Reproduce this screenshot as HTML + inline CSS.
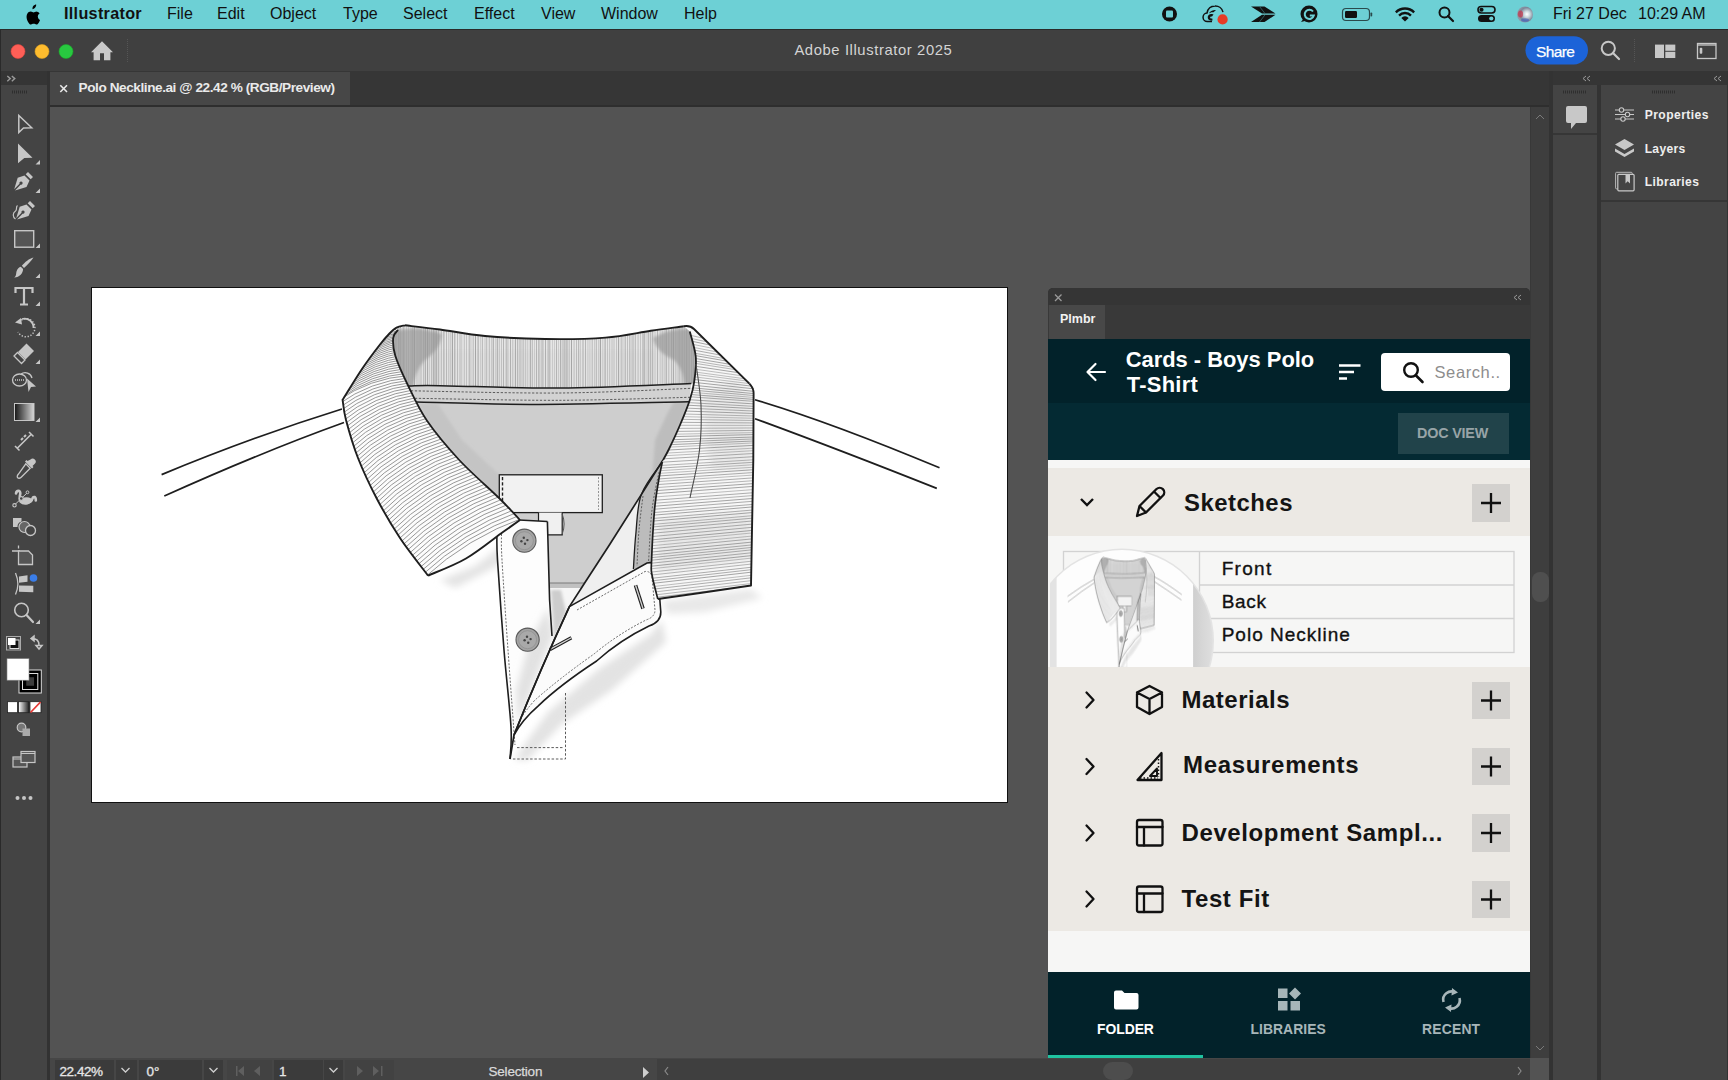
<!DOCTYPE html>
<html><head><meta charset="utf-8">
<style>
*{margin:0;padding:0;box-sizing:border-box}
html,body{width:1728px;height:1080px;overflow:hidden;background:#535353;font-family:"Liberation Sans",sans-serif}
.a{position:absolute}
svg{position:absolute;overflow:visible}
.mi{position:absolute;top:5.4px;font-size:16px;color:#111;line-height:18px;white-space:nowrap}
.t{position:absolute;white-space:nowrap;line-height:1}
</style></head><body>
<!-- MENUBAR -->
<div class="a" style="left:0;top:0;width:1728px;height:29px;background:#6dd0d5"></div>
<svg style="left:0;top:0" width="1728" height="29">
  <path d="M32.5 9.2c1-.1 2.3-.9 2.9-1.9.6-.9.9-2 .8-2.9-.9 0-2 .6-2.7 1.4-.6.7-1.1 1.9-1 2.9zM36.9 11.5c-1.4-.1-2.6.9-3.3.9-.7 0-1.7-.8-2.8-.8-1.4 0-2.8.9-3.5 2.2-1.5 2.6-.4 6.5 1.1 8.6.7 1 1.5 2.2 2.6 2.1 1-.04 1.4-.7 2.7-.7s1.6.7 2.700.7c1.1 0 1.8-1 2.500-2.100.8-1.200 1.100-2.300 1.100-2.400 0 0-2.200-.9-2.200-3.400 0-2.100 1.700-3.100 1.800-3.200-1-1.500-2.500-1.600-3-1.700z" fill="#000"/>
  <!-- stop -->
  <circle cx="1169.5" cy="14" r="7.5" fill="#111"/><rect x="1166" y="10.5" width="7" height="7" rx="1" fill="#6dd0d5"/>
  <!-- CC -->
  <path d="M1212 21.500h-4.500a4.200 4.200 0 0 1-.5-8.400c.800-4 3.800-7 8-7a8 8 0 0 1 8 6" fill="none" stroke="#111" stroke-width="1.500"/>
  <path d="M1209.500 12.500c1.500-1.800 4-2.800 6.500-2.500l-2.500 2.200c-2-.3-3.500.4-4.500 1.200z" fill="#111"/>
  <path d="M1212.500 20.500c-2.500.6-4.800-.8-4.800-3.200 0-2.300 2.100-3.800 4.300-3.300l1.500.5-1.500 2c-1-.3-1.900.2-1.900 1 0 1 1.200 1.300 2.200.9z" fill="#111"/>
  <circle cx="1222.600" cy="19.400" r="5.100" fill="#e63b25"/>
  <!-- arrows -->
  <path d="M1251 6.500h13.500l11 7h-13.500z M1251 22h13.500l11-7.200h-13.500z" fill="#111"/><path d="M1259.500 6.500l5.500 7M1259.500 22l5.500-7.200" stroke="#3a6c70" stroke-width=".8"/>
  <!-- G -->
  <circle cx="1309" cy="14" r="8.5" fill="#111"/><path d="M1301 22l3-4 1 3z" fill="#111"/>
  <path d="M1313 11.5a4.6 4.6 0 1 0 .8 4h-4" fill="none" stroke="#6dd0d5" stroke-width="2"/>
  <!-- battery -->
  <rect x="1342.5" y="8.5" width="27" height="12" rx="3.5" fill="none" stroke="#2a4a4c" stroke-width="1.2"/>
  <rect x="1345" y="11" width="12" height="7" rx="1.2" fill="#111"/><rect x="1370.5" y="12.5" width="1.7" height="4" rx=".8" fill="#2a4a4c"/>
  <!-- wifi -->
  <path d="M1395 11.5a14 14 0 0 1 20 0l-1.7 1.800a11.500 11.500 0 0 0-16.600 0z M1398.200 14.700a9.500 9.500 0 0 1 13.600 0l-1.700 1.800a7 7 0 0 0-10.200 0z M1401.300 17.900a5 5 0 0 1 7.400 0L1405 21.600z" fill="#111"/>
  <!-- search -->
  <circle cx="1444.5" cy="12.5" r="5" fill="none" stroke="#111" stroke-width="2"/><path d="M1448 16l5 5" stroke="#111" stroke-width="2.2" stroke-linecap="round"/>
  <!-- control center -->
  <rect x="1478" y="6.5" width="17" height="6.500" rx="3.250" fill="none" stroke="#111" stroke-width="1.600"/><circle cx="1481.500" cy="9.750" r="2.100" fill="#111"/>
  <rect x="1478" y="15" width="17" height="7" rx="3.5" fill="#111"/><circle cx="1491.300" cy="18.500" r="2.100" fill="#6dd0d5"/>
  <!-- siri -->
  <defs><radialGradient id="siri" cx="62%" cy="48%" r="55%"><stop offset="0" stop-color="#ffffff"/><stop offset=".35" stop-color="#c9d6dc"/><stop offset=".75" stop-color="#7d8798"/><stop offset="1" stop-color="#8c9aa8"/></radialGradient></defs>
  <circle cx="1525" cy="14.500" r="8" fill="url(#siri)"/><ellipse cx="1520.500" cy="14" rx="2.600" ry="3.500" fill="#c8344a" opacity=".7"/><ellipse cx="1525" cy="20" rx="4" ry="1.800" fill="#3a5fc0" opacity=".6"/>
</svg>
<div class="t" style="left:64px;top:5px;font-size:16.2px;color:#111;font-weight:bold;letter-spacing:.3px">Illustrator</div>
<div class="mi" style="left:167px">File</div>
<div class="mi" style="left:217px">Edit</div>
<div class="mi" style="left:270px">Object</div>
<div class="mi" style="left:343px">Type</div>
<div class="mi" style="left:403px">Select</div>
<div class="mi" style="left:474px">Effect</div>
<div class="mi" style="left:541px">View</div>
<div class="mi" style="left:601px">Window</div>
<div class="mi" style="left:684px">Help</div>
<div class="mi" style="left:1553px">Fri 27 Dec</div>
<div class="mi" style="left:1638px">10:29 AM</div>

<!-- TITLE BAR -->
<div class="a" style="left:0;top:29px;width:1728px;height:42px;background:#404040;border-top:1px solid #2a2a2a"></div>
<svg style="left:0;top:29px" width="1728" height="42">
  <circle cx="18" cy="22.5" r="7" fill="#fe5f57" stroke="#e0443e" stroke-width=".6"/>
  <circle cx="42" cy="22.5" r="7" fill="#febc2e" stroke="#dea123" stroke-width=".6"/>
  <circle cx="66" cy="22.5" r="7" fill="#28c840" stroke="#1aab29" stroke-width=".6"/>
  <path d="M102 12.3l11 11h-2.600v7.900h-6.400v-7h-4v7h-6.400v-7.900h-2.600z" fill="#c9c9c9"/>
  <line x1="127.500" y1="10" x2="127.500" y2="34" stroke="#555" stroke-dasharray="1 1"/>
  <!-- right icons -->
  <rect x="1525.500" y="7.200" width="62.500" height="28.300" rx="14.150" fill="#1c63d8"/>
  <circle cx="1608.300" cy="19.300" r="6.600" fill="none" stroke="#c7c7c7" stroke-width="2"/><path d="M1613 24l6 6" stroke="#c7c7c7" stroke-width="2.200" stroke-linecap="round"/>
  <line x1="1634.500" y1="10" x2="1634.500" y2="33" stroke="#555" stroke-dasharray="1 1"/>
  <rect x="1655" y="15.600" width="9" height="13.400" fill="#c7c7c7"/><rect x="1665.300" y="15.600" width="10" height="6.200" fill="#c7c7c7"/><rect x="1665.300" y="22.800" width="10" height="6.200" fill="#c7c7c7"/>
  <rect x="1697.500" y="14.500" width="18.500" height="15" fill="none" stroke="#c7c7c7" stroke-width="1.300"/><line x1="1697.500" y1="16" x2="1716" y2="16" stroke="#c7c7c7" stroke-width="1.300"/><rect x="1699.700" y="18.700" width="2.600" height="6" rx="1" fill="#c7c7c7"/>
</svg>
<div class="t" style="left:794.4px;top:43.4px;font-size:14.8px;color:#d4d4d4;letter-spacing:.6px">Adobe Illustrator 2025</div>
<div class="t" style="left:1536px;top:44px;font-size:15.5px;color:#fff;letter-spacing:-.6px;-webkit-text-stroke:.25px #fff">Share</div>

<!-- TAB ROW -->
<div class="a" style="left:0;top:71px;width:1553px;height:36px;background:#363636"></div>
<div class="a" style="left:50px;top:72px;width:300px;height:33px;background:#474747"></div>
<div class="a" style="left:50px;top:105px;width:1503px;height:2px;background:#2e2e2e"></div>
<svg style="left:0;top:71px" width="400" height="36">
  <path d="M60.300 14.300l6.700 6.700M67 14.300l-6.700 6.700" stroke="#e8e8e8" stroke-width="1.600"/>
</svg>
<div class="t" style="left:78.6px;top:81.1px;font-size:13.6px;color:#eaeaea;font-weight:bold;letter-spacing:-.43px">Polo Neckline.ai @ 22.42 % (RGB/Preview)</div>

<!-- LEFT TOOLBAR -->
<div class="a" style="left:0;top:71px;width:48px;height:14px;background:#353535"></div>
<div class="a" style="left:0;top:85px;width:48px;height:995px;background:#444"></div>
<div class="a" style="left:47px;top:71px;width:3px;height:1009px;background:#323232"></div>
<div class="a" style="left:0;top:29px;width:1px;height:1051px;background:#2a2a2a"></div>
<svg style="left:0;top:0" width="50" height="1080" id="tools">
  <path d="M7.300 76l3 2.600-3 2.600M11.800 76l3 2.600-3 2.600" fill="none" stroke="#9a9a9a" stroke-width="1.400"/>
  <path d="M12 92h15" stroke="#2e2e2e" stroke-width="3" stroke-dasharray="1 1"/>
  <g fill="#c6c6c6" stroke="#c6c6c6">
  <path d="M18.800 115.500v17l4.700-4.600 8.200-.2z" fill="none" stroke-width="1.500"/>
  <path d="M18 143.500l14.500 14.300-8.200.3-6.300 5.200z" stroke="none"/>
  <path d="M35.500 164.500h4.500v-4.500z M35.500 193h4.500v-4.500z M35.500 248h4.500v-4.500z M35.500 278h4.500v-4.500z M35.500 306h4.500v-4.500z M35.500 336h4.500v-4.500z M35.500 364h4.500v-4.500z M35.500 422h4.500v-4.500z M35.500 624h4.500v-4.500z" stroke="none"/>
  <!-- pen -->
  <path d="M28 172l5 5-2.300 2.300-5-5z M24.500 175.500l5 5-3 6.500-11.500 3.500 5.500-5.800a1.600 1.600 0 1 0-1-1l-5.300 5.500 3.500-11.500z" stroke="none"/>
  <!-- curvature -->
  <path d="M30 201l5 5-2.300 2.300-5-5z M26.500 204.500l5 5-3 6.500-11.500 3.500 5.500-5.800a1.600 1.600 0 1 0-1-1l-5.300 5.500 3.500-11.500z" stroke="none"/>
  <path d="M15.500 219c-3-2-3-6 0-8 2-1.500 0-4 2-5.500" fill="none" stroke-width="1.200"/>
  <!-- rect -->
  <rect x="14.700" y="230.700" width="19" height="16.500" fill="#555" stroke-width="1.400"/>
  <!-- brush -->
  <path d="M33.500 257.500c-2 3-6 7.500-9.500 10.500l-2.200-2.200c3-3.500 7.500-7.500 11.700-8.300z M20.800 266.800l2.300 2.300c0 4-3.500 8.500-9 8.400 2.500-1.200 1.800-4 2.500-6.200.8-2.500 2.400-4.300 4.200-4.500z" stroke="none"/>
  <!-- Type -->
  <path d="M15.500 293v-5h17v5M24 288v16.500M20 304.500h8" fill="none" stroke-width="2.200"/>
  <!-- rotate -->
  <path d="M19 322a9 9 0 1 1 -1 10" fill="none" stroke-width="1.500" stroke-dasharray="1.300 1.700"/>
  <path d="M22 319a9 9 0 0 1 11.500 9" fill="none" stroke-width="1.800"/>
  <path d="M15 322.500l6-4.500 1 6.500z" stroke="none"/>
  <!-- eraser -->
  <path d="M26.500 343.500l7.500 7.500-8.500 8.500-7.500-7.500z" stroke="none"/>
  <path d="M17.500 352.500l7.500 7.500-3.500 3.500-7.500-7.500z" fill="none" stroke-width="1.300"/>
  <!-- shape builder -->
  <ellipse cx="19.500" cy="380" rx="7" ry="6" fill="none" stroke-width="1.300"/>
  <path d="M21 374a7 7 0 0 1 11 4" fill="none" stroke-width="1.300"/>
  <path d="M15 380h10" stroke-width="1.300" stroke-dasharray="1 1"/>
  <path d="M27 378.500l9 8-5 .5-2.500 5z" stroke="none"/>
  <!-- gradient -->
  <defs><linearGradient id="gr" x1="0" y1="0" x2="1" y2="0"><stop offset="0" stop-color="#151515"/><stop offset="1" stop-color="#d8d8d8"/></linearGradient></defs>
  <rect x="14.500" y="403.500" width="19.500" height="17" fill="url(#gr)" stroke-width="1"/>
  <!-- width/measure -->
  <path d="M15 446l4.500 4.500M29 432l4.500 4.500M17 448.500l14.500-14.500" fill="none" stroke-width="1.600"/>
  <path d="M21 440l2-2M24 437l2-2" stroke-width="2"/>
  <!-- eyedropper -->
  <path d="M30.500 459.500a3 3 0 0 1 4.300 4.300l-2.300 2.300 1 1-1.500 1.500-7-7 1.500-1.500 1 1z" stroke="none"/>
  <path d="M25.800 463.800l4.400 4.400-9 9c-1 1-2.600 1.500-3.500.6-.9-.9-.4-2.500.6-3.500z" fill="none" stroke-width="1.300"/>
  <!-- puppet warp -->
  <g transform="translate(5 455)">
   <path d="M11 38.500C11.500 35 15.500 35 15.300 38.500C15 41.500 13.500 43.500 15.500 46.500C19 50 26 48.500 27.500 43.500C28.500 41 31 41.500 30.800 45.500" fill="none" stroke-width="2.600" stroke-linecap="round"/>
   <ellipse cx="21.500" cy="45.500" rx="6" ry="3.300" stroke="none"/>
   <path d="M9.500 50L22.500 37.500" stroke-width="1" stroke="#c6c6c6"/>
   <circle cx="22.500" cy="37.300" r="1.400" fill="#444" stroke-width="1"/>
   <circle cx="16.300" cy="43.500" r="1.900" fill="#444" stroke-width="1.100"/>
   <circle cx="9.500" cy="50.300" r="1.700" fill="#444" stroke-width="1.100"/>
  </g>
  <!-- blend/live paint -->
  <path d="M13 518h8.500v3.500a5.500 5.500 0 0 0-4 5.500h-4.500z" stroke="none"/>
  <circle cx="24.500" cy="527" r="5.500" fill="#666" stroke-width="1.200"/><circle cx="30.500" cy="530.500" r="5" fill="#444" stroke-width="1.300"/>
  <!-- artboard -->
  <path d="M12 551h8M18.500 545.500v3" fill="none" stroke-width="1.300"/>
  <path d="M18.500 551v13.500h14v-9.500l-4-4z" fill="#555" stroke-width="1.300"/>
  <!-- perspective -->
  <path d="M15.500 573c3 7 3 15 0 21.500" fill="none" stroke-width="1.300"/>
  <path d="M19 576.500l8.500-1.200v6.500l-8.500 1z M19 585.500l14.300.3v6.500l-14.300-.5z" stroke="none"/>
  <!-- zoom -->
  <circle cx="21.500" cy="610" r="6.800" fill="none" stroke-width="1.600"/><path d="M26.500 615l6.500 7" stroke-width="2.200" stroke-linecap="round"/>
  <!-- swap/default -->
  <path d="M32 638.500c4 0 7 2 7 6.500M39 649l-3-3.500h6z M31 638.500l3-2.500v5z" fill="none" stroke-width="1.500"/>
  </g>
  <circle cx="33.500" cy="578" r="3.800" fill="#3a7de8"/>
  <rect x="6.500" y="636.500" width="14" height="13.500" fill="none" stroke="#aaa" stroke-width="1"/>
  <rect x="10" y="640" width="9" height="8.500" fill="#111" stroke="#ddd" stroke-width="1"/>
  <rect x="8" y="638" width="7.500" height="7" fill="#fff"/>
  <!-- big fill/stroke -->
  <rect x="19" y="670" width="22.300" height="23" fill="#000" stroke="#ddd" stroke-width="1"/>
  <rect x="22.500" y="673.500" width="15.300" height="16" fill="none" stroke="#ddd" stroke-width="1"/>
  <rect x="25.500" y="676.500" width="9.300" height="10" fill="#3c3c3c" stroke="#000" stroke-width="1.500"/>
  <rect x="7" y="658.700" width="22" height="21.500" fill="#fff" stroke="#888" stroke-width=".6"/>
  <!-- color modes -->
  <rect x="7.500" y="701.700" width="10" height="11" fill="#fff" stroke="#222" stroke-width=".8"/>
  <defs><linearGradient id="g2" x1="0" x2="1"><stop offset="0" stop-color="#fff"/><stop offset="1" stop-color="#222"/></linearGradient></defs>
  <rect x="18.500" y="701.700" width="10.500" height="11" fill="url(#g2)" stroke="#222" stroke-width=".8"/>
  <rect x="30" y="701.700" width="11" height="11" fill="#fff" stroke="#222" stroke-width=".8"/>
  <path d="M30.500 712.500l10-10.500" stroke="#e53935" stroke-width="1.800"/>
  <!-- draw mode -->
  <circle cx="21.500" cy="727.500" r="4.300" fill="#777" stroke="#c6c6c6" stroke-width="1.200"/>
  <rect x="22.500" y="728.500" width="7.500" height="7.500" fill="#aaa"/>
  <!-- screen mode -->
  <rect x="13" y="757" width="14" height="10" fill="#555" stroke="#c6c6c6" stroke-width="1.200"/>
  <rect x="21" y="751.500" width="14" height="11" fill="#555" stroke="#c6c6c6" stroke-width="1.200"/>
  <path d="M21 753.500h14M13 759h8" stroke="#c6c6c6" stroke-width="1"/>
  <!-- dots -->
  <circle cx="17.500" cy="798" r="2" fill="#c6c6c6"/><circle cx="24" cy="798" r="2" fill="#c6c6c6"/><circle cx="30.500" cy="798" r="2" fill="#c6c6c6"/>
</svg>

<!-- CANVAS SCROLLBARS -->
<div class="a" style="left:1530px;top:107px;width:19px;height:951px;background:#3e3e3e;border-left:1px solid #383838"></div>
<div class="a" style="left:1532px;top:572px;width:17px;height:30px;background:#4f4f4f;border-radius:8px"></div>
<div class="a" style="left:1549px;top:71px;width:4px;height:1009px;background:#333"></div>
<svg style="left:1530px;top:107px" width="20" height="951">
  <path d="M6 12l4-4 4 4" fill="none" stroke="#7a7a7a" stroke-width="1"/>
  <path d="M6 939l4 4 4-4" fill="none" stroke="#7a7a7a" stroke-width="1"/>
</svg>

<!-- STATUS BAR -->
<div class="a" style="left:50px;top:1058px;width:1480px;height:22px;background:#464646"></div>
<div class="a" style="left:55px;top:1060px;width:59px;height:20px;background:#3b3b3b"></div>
<div class="a" style="left:116px;top:1060px;width:21px;height:20px;background:#3b3b3b"></div>
<div class="a" style="left:139px;top:1060px;width:63px;height:20px;background:#3b3b3b"></div>
<div class="a" style="left:204px;top:1060px;width:19px;height:20px;background:#3b3b3b"></div>
<div class="a" style="left:227px;top:1060px;width:45px;height:20px;background:#424242"></div>
<div class="a" style="left:274px;top:1060px;width:49px;height:20px;background:#3b3b3b"></div>
<div class="a" style="left:324px;top:1060px;width:19px;height:20px;background:#3b3b3b"></div>
<div class="a" style="left:345px;top:1060px;width:49px;height:20px;background:#424242"></div>
<div class="a" style="left:657px;top:1059px;width:873px;height:21px;background:#3f3f3f"></div>
<div class="a" style="left:1103px;top:1062px;width:30px;height:18px;background:#4d4d4d;border-radius:9px"></div>
<div class="t" style="left:59.5px;top:1064.5px;font-size:13.5px;color:#e6e6e6;letter-spacing:-.45px;-webkit-text-stroke:.3px #e6e6e6">22.42%</div>
<div class="t" style="left:146.5px;top:1064.5px;font-size:13.5px;color:#e6e6e6;-webkit-text-stroke:.3px #e6e6e6">0°</div>
<div class="t" style="left:279px;top:1064.5px;font-size:13.5px;color:#e6e6e6;-webkit-text-stroke:.3px #e6e6e6">1</div>
<div class="t" style="left:488.5px;top:1064.5px;font-size:13.5px;color:#dadada;letter-spacing:-.2px;-webkit-text-stroke:.25px #dadada">Selection</div>
<svg style="left:0;top:1058px" width="1550" height="22">
  <g fill="none" stroke="#cfcfcf" stroke-width="1.300">
  <path d="M121.500 10l4 4 4-4M209.500 10l4 4 4-4M329.500 10l4 4 4-4"/>
  </g>
  <g fill="#5f5f5f">
  <path d="M236 8v10h1.500v-10zM244 8v10l-6-5z M260 8v10l-6-5z M357 8v10l6-5z M373 8v10l6-5zM381 8v10h1.500v-10z"/>
  </g>
  <path d="M643 9v11l6-5.500z" fill="#cfcfcf"/>
  <path d="M668 9l-3 4 3 4" fill="none" stroke="#8a8a8a" stroke-width="1.200"/>
  <path d="M1518 9l3 4-3 4" fill="none" stroke="#8a8a8a" stroke-width="1.200"/>
</svg>

<!-- RIGHT DOCK -->
<div class="a" style="left:1553px;top:71px;width:175px;height:14px;background:#353535"></div>
<div class="a" style="left:1553px;top:85px;width:44px;height:995px;background:#444"></div>
<div class="a" style="left:1597px;top:85px;width:4px;height:995px;background:#333"></div>
<div class="a" style="left:1601px;top:85px;width:126px;height:995px;background:#444"></div>
<div class="a" style="left:1727px;top:71px;width:1px;height:1009px;background:#333"></div>
<div class="a" style="left:1553px;top:133px;width:44px;height:2px;background:#363636"></div>
<div class="a" style="left:1601px;top:200px;width:126px;height:2px;background:#363636"></div>
<svg style="left:1553px;top:71px" width="175" height="140">
  <path d="M33 5l-3 2.500 3 2.500M37 5l-3 2.500 3 2.500M164 5l-3 2.500 3 2.500M168 5l-3 2.500 3 2.500" fill="none" stroke="#9a9a9a" stroke-width="1"/>
  <path d="M10 21h24M99 21h23" stroke="#2e2e2e" stroke-width="3" stroke-dasharray="1 1"/>
  <path d="M15 35h17a2 2 0 0 1 2 2v13a2 2 0 0 1-2 2h-9l-5 6v-6h-3a2 2 0 0 1-2-2v-13a2 2 0 0 1 2-2z" fill="#c8c8c8"/>
  <g stroke="#c8c8c8" stroke-width="1.100" fill="#444">
   <path d="M62 39h19M62 43.500h19M62 48h19"/>
   <circle cx="68.500" cy="39" r="2.200"/><circle cx="74.500" cy="43.500" r="2.200"/><circle cx="70" cy="48" r="2.200"/>
  </g>
  <path d="M71.500 68l9.500 5.500-9.500 5.500-9.500-5.500z" fill="#c8c8c8"/>
  <path d="M62 77.500l9.500 5.500 9.500-5.500v3l-9.500 5.500-9.500-5.500z" fill="#c8c8c8"/>
  <rect x="62.600" y="101.300" width="16.600" height="16.600" rx="1" fill="none" stroke="#b8b8b8" stroke-width="1"/>
  <rect x="64.800" y="103.300" width="16.300" height="16.500" rx="1" fill="#444" stroke="#c8c8c8" stroke-width="1.200"/>
  <path d="M72.500 104v8.500l2.200-2.200 2.300 2.200v-8.500z" fill="#c8c8c8"/>
</svg>
<div class="t" style="left:1644.7px;top:108.7px;font-size:12.1px;color:#eeeeee;font-weight:bold;letter-spacing:.44px">Properties</div>
<div class="t" style="left:1644.7px;top:142.5px;font-size:12.1px;color:#eeeeee;font-weight:bold;letter-spacing:.3px">Layers</div>
<div class="t" style="left:1644.7px;top:175.9px;font-size:12.1px;color:#eeeeee;font-weight:bold;letter-spacing:.4px">Libraries</div>

<!-- ARTBOARD -->
<div class="a" style="left:91px;top:287px;width:917px;height:516px;background:#fff;border:1px solid #111"></div>
<svg style="left:0;top:0" width="1728" height="1080"><g id="drw"><defs><filter id="blr" x="-30%" y="-30%" width="160%" height="160%"><feGaussianBlur stdDeviation="3.5"/></filter><filter id="blr2" x="-30%" y="-30%" width="160%" height="160%"><feGaussianBlur stdDeviation="1.6"/></filter></defs>
<path d="M416.0 402.0 L417.0 402.0 L418.1 402.0 L419.2 402.1 L420.4 402.1 L421.7 402.1 L423.0 402.2 L424.3 402.2 L425.7 402.3 L427.1 402.3 L428.6 402.3 L430.2 402.4 L431.7 402.4 L433.4 402.5 L435.0 402.5 L436.7 402.6 L438.4 402.6 L440.2 402.7 L442.0 402.8 L443.9 402.8 L445.8 402.9 L447.7 402.9 L449.6 403.0 L451.6 403.0 L453.6 403.1 L455.7 403.2 L457.8 403.2 L459.9 403.3 L462.0 403.3 L464.1 403.4 L466.3 403.5 L468.5 403.5 L470.7 403.6 L473.0 403.6 L475.2 403.7 L477.5 403.7 L479.8 403.8 L482.1 403.8 L484.4 403.9 L486.8 403.9 L489.1 404.0 L491.5 404.0 L493.9 404.1 L496.3 404.1 L498.7 404.2 L501.1 404.2 L503.5 404.2 L505.9 404.3 L508.3 404.3 L510.7 404.3 L513.1 404.3 L515.5 404.4 L518.0 404.4 L520.4 404.4 L522.8 404.4 L525.2 404.4 L527.6 404.4 L530.0 404.4 L531.7 404.4 L533.5 404.4 L535.4 404.4 L537.2 404.4 L539.1 404.4 L541.0 404.4 L543.0 404.3 L545.0 404.3 L547.0 404.3 L549.1 404.3 L551.1 404.3 L553.2 404.2 L555.4 404.2 L557.5 404.2 L559.7 404.2 L561.9 404.1 L564.1 404.1 L566.4 404.1 L568.6 404.0 L570.9 404.0 L573.2 404.0 L575.5 403.9 L577.8 403.9 L580.1 403.9 L582.4 403.8 L584.8 403.8 L587.1 403.8 L589.5 403.7 L591.8 403.7 L594.2 403.6 L596.6 403.6 L598.9 403.5 L601.3 403.5 L603.7 403.5 L606.0 403.4 L608.4 403.4 L610.8 403.3 L613.1 403.3 L615.5 403.2 L617.8 403.2 L620.1 403.1 L622.4 403.1 L624.7 403.0 L627.0 403.0 L629.3 402.9 L631.6 402.9 L633.8 402.8 L636.0 402.8 L638.2 402.8 L640.4 402.7 L642.6 402.7 L644.7 402.6 L646.8 402.6 L648.9 402.5 L651.0 402.5 L653.0 402.4 L655.0 402.4 L657.0 402.4 L658.9 402.3 L660.8 402.3 L662.7 402.2 L664.5 402.2 L666.3 402.2 L668.1 402.1 L669.8 402.1 L671.5 402.0 L673.1 402.0 L674.7 402.0 L676.2 401.9 L677.7 401.9 L679.2 401.9 L680.6 401.9 L682.0 401.8 L683.3 401.8 L684.5 401.8 L685.7 401.8 L686.9 401.7 L688.0 401.7 L689.0 401.7 L689.2 401.7 L688.6 403.5 L687.9 405.4 L687.2 407.3 L686.5 409.2 L685.7 411.2 L684.9 413.2 L684.1 415.2 L683.3 417.2 L682.5 419.2 L681.6 421.1 L680.8 423.1 L680.0 425.0 L679.2 426.9 L678.3 428.9 L677.4 430.9 L676.5 432.9 L675.6 434.9 L674.7 436.9 L673.8 438.9 L672.9 440.8 L672.1 442.6 L671.2 444.4 L670.4 446.0 L669.7 447.6 L669.0 449.0 L667.6 451.7 L666.4 454.0 L665.3 456.0 L664.4 457.6 L663.6 459.0 L663.0 460.0 L641.3 494.6 L610.0 544.0 L584.0 584.0 L549.0 584.0 L547.4 521.5 L520.0 520.0 L520.0 520.0 L519.2 519.2 L518.4 518.3 L517.4 517.2 L516.3 516.1 L515.2 514.8 L513.9 513.4 L512.5 511.9 L511.1 510.4 L509.5 508.7 L507.8 506.9 L506.0 505.1 L504.1 503.1 L502.1 501.1 L500.0 499.0 L498.9 497.9 L497.7 496.8 L496.5 495.6 L495.2 494.4 L493.9 493.1 L492.5 491.8 L491.1 490.5 L489.6 489.2 L488.1 487.8 L486.6 486.4 L485.1 485.0 L483.5 483.5 L481.9 482.1 L480.3 480.6 L478.8 479.1 L477.2 477.7 L475.6 476.2 L474.0 474.7 L472.4 473.2 L470.8 471.7 L469.3 470.2 L467.7 468.7 L466.2 467.2 L464.7 465.7 L463.3 464.3 L461.9 462.8 L460.5 461.4 L459.2 460.0 L457.7 458.4 L456.3 456.9 L454.9 455.3 L453.4 453.7 L452.0 452.2 L450.6 450.6 L449.2 449.0 L447.9 447.4 L446.5 445.9 L445.2 444.3 L443.8 442.7 L442.5 441.2 L441.2 439.6 L439.9 438.0 L438.7 436.5 L437.4 434.9 L436.2 433.3 L435.0 431.8 L433.8 430.2 L432.7 428.7 L431.5 427.2 L430.4 425.6 L429.3 424.1 L428.2 422.6 L427.2 421.1 L425.9 419.2 L424.7 417.3 L423.5 415.5 L422.4 413.6 L421.3 411.7 L420.2 409.8 L419.2 408.0 L418.2 406.1 L417.2 404.3 L416.3 402.4Z" fill="#cecece"/>
<path d="M674 402 L689 402 L680 425 L669 449 L663 460 L652 480 L655 440 L668 412Z" fill="#bdbdbd" filter="url(#blr2)"/>
<path d="M418 403 L438 404 L462 440 L505 480 L500 499 L459 460 L427 421Z" fill="#c4c4c4" filter="url(#blr2)"/>
<path d="M549 583 L586 583 L583 588 L549 588Z" fill="#c0c0c0"/>
<path d="M549.5 583 H585" stroke="#7a7a7a" stroke-width="1"/>
<path d="M549 588 L583 588 L569.4 606.6 L552 636 Z" fill="#f6f6f6"/>
<path d="M551 590 L561 590 L566 612 L554 640 Z" fill="#cdcdcd" filter="url(#blr2)"/>
<path d="M405.0 325.3 L406.1 325.4 L407.5 325.6 L409.0 325.8 L410.6 326.0 L412.4 326.2 L414.4 326.4 L416.4 326.6 L418.6 326.9 L420.8 327.1 L423.1 327.4 L425.5 327.7 L427.9 328.0 L430.3 328.3 L432.8 328.6 L435.2 328.9 L437.6 329.2 L440.0 329.5 L441.8 329.8 L443.7 330.0 L445.5 330.3 L447.4 330.6 L449.2 330.9 L451.1 331.2 L453.1 331.5 L455.0 331.8 L456.9 332.2 L458.9 332.5 L460.9 332.8 L462.9 333.2 L465.0 333.5 L467.1 333.8 L469.2 334.1 L471.4 334.4 L473.5 334.7 L475.8 335.0 L478.0 335.3 L480.3 335.5 L482.6 335.8 L485.0 336.0 L486.8 336.2 L488.6 336.3 L490.4 336.5 L492.3 336.6 L494.2 336.8 L496.1 336.9 L498.0 337.0 L500.0 337.2 L502.0 337.3 L504.0 337.4 L506.0 337.5 L508.0 337.7 L510.1 337.8 L512.1 337.9 L514.2 338.0 L516.3 338.1 L518.4 338.2 L520.5 338.3 L522.5 338.4 L524.6 338.5 L526.7 338.5 L528.8 338.6 L530.9 338.7 L533.0 338.7 L535.1 338.8 L537.1 338.8 L539.2 338.9 L541.3 338.9 L543.3 339.0 L545.3 339.0 L547.3 339.0 L549.3 339.0 L551.4 339.1 L553.4 339.1 L555.5 339.1 L557.6 339.1 L559.7 339.1 L561.8 339.1 L563.8 339.1 L565.9 339.1 L568.0 339.0 L570.1 339.0 L572.2 339.0 L574.3 339.0 L576.3 338.9 L578.4 338.9 L580.5 338.8 L582.5 338.8 L584.5 338.7 L586.5 338.6 L588.5 338.6 L590.5 338.5 L592.5 338.4 L594.4 338.3 L596.3 338.2 L598.2 338.1 L600.1 338.0 L601.9 337.9 L603.7 337.7 L605.5 337.6 L607.9 337.4 L610.2 337.2 L612.5 336.9 L614.8 336.7 L617.0 336.4 L619.2 336.1 L621.4 335.8 L623.5 335.4 L625.7 335.1 L627.7 334.7 L629.8 334.4 L631.8 334.0 L633.8 333.7 L635.8 333.3 L637.7 333.0 L639.7 332.6 L641.5 332.3 L643.4 332.0 L645.3 331.7 L647.1 331.4 L648.9 331.1 L650.7 330.8 L653.2 330.4 L655.6 330.1 L658.1 329.7 L660.6 329.4 L663.0 329.1 L665.5 328.7 L667.8 328.4 L670.1 328.1 L672.3 327.8 L674.3 327.6 L676.3 327.3 L678.1 327.1 L679.8 326.8 L681.3 326.6 L682.7 326.5 L683.8 326.3 L689.8 331.5 L690.1 332.6 L690.5 334.0 L690.9 335.7 L691.4 337.5 L692.0 339.5 L692.6 341.6 L693.2 343.9 L693.8 346.1 L694.3 348.4 L694.8 350.7 L695.2 352.9 L695.6 355.0 L695.8 357.0 L695.9 359.1 L696.0 361.2 L696.0 363.3 L696.0 365.4 L695.9 367.4 L695.7 369.5 L695.5 371.6 L695.3 373.6 L695.1 375.6 L694.8 377.5 L694.6 379.4 L694.3 381.2 L694.0 383.5 L691.3 383.5 L690.3 383.5 L689.2 383.6 L688.0 383.6 L686.8 383.7 L685.5 383.7 L684.2 383.8 L682.8 383.8 L681.3 383.9 L679.8 383.9 L678.3 384.0 L676.7 384.1 L675.0 384.1 L673.3 384.2 L671.6 384.3 L669.8 384.4 L668.0 384.4 L666.1 384.5 L664.2 384.6 L662.3 384.7 L660.3 384.8 L658.3 384.9 L656.3 384.9 L654.2 385.0 L652.1 385.1 L650.0 385.2 L647.9 385.3 L645.7 385.4 L643.5 385.5 L641.3 385.6 L639.0 385.7 L636.8 385.8 L634.5 385.8 L632.2 385.9 L629.9 386.0 L627.6 386.1 L625.3 386.2 L623.0 386.3 L620.6 386.4 L618.3 386.5 L615.9 386.6 L613.6 386.6 L611.2 386.7 L608.9 386.8 L606.5 386.9 L604.2 387.0 L601.9 387.0 L599.5 387.1 L597.2 387.2 L594.9 387.3 L592.6 387.3 L590.3 387.4 L588.0 387.5 L585.7 387.5 L583.5 387.6 L581.3 387.6 L579.1 387.7 L576.9 387.7 L574.7 387.8 L572.6 387.8 L570.5 387.9 L568.4 387.9 L566.4 387.9 L564.3 388.0 L562.4 388.0 L560.4 388.0 L558.3 388.0 L556.2 388.0 L554.0 388.0 L551.9 388.0 L549.7 388.0 L547.5 388.0 L545.3 388.0 L543.1 388.0 L540.9 388.0 L538.7 388.0 L536.5 388.0 L534.2 387.9 L532.0 387.9 L529.7 387.9 L527.5 387.8 L525.2 387.8 L523.0 387.8 L520.7 387.7 L518.5 387.7 L516.2 387.6 L514.0 387.6 L511.7 387.5 L509.5 387.5 L507.3 387.4 L505.0 387.4 L502.8 387.3 L500.6 387.3 L498.4 387.2 L496.2 387.2 L494.0 387.1 L491.9 387.1 L489.7 387.0 L487.6 386.9 L485.5 386.9 L483.4 386.8 L481.3 386.8 L479.2 386.7 L477.2 386.6 L475.2 386.6 L473.2 386.5 L471.2 386.5 L469.3 386.4 L467.4 386.4 L465.5 386.3 L463.7 386.3 L461.8 386.2 L460.0 386.2 L458.3 386.1 L456.5 386.1 L454.8 386.0 L453.2 386.0 L451.6 385.9 L450.0 385.9 L448.4 385.9 L446.9 385.8 L445.4 385.8 L444.0 385.8 L442.6 385.7 L441.3 385.7 L440.0 385.7 L435.5 385.6 L431.5 385.6 L428.0 385.6 L425.0 385.6 L422.3 385.6 L420.1 385.6 L418.1 385.7 L416.4 385.7 L414.9 385.7 L413.6 385.8 L412.5 385.8 L411.5 385.9 L410.6 385.9 L409.7 386.0 L408.8 386.0 L407.8 386.0 L407.8 385.0 L406.7 382.8 L405.7 380.7 L404.7 378.5 L403.7 376.4 L402.7 374.3 L401.8 372.3 L400.9 370.3 L400.0 368.3 L399.2 366.3 L398.4 364.4 L397.7 362.6 L397.0 360.8 L396.4 359.1 L395.8 357.4 L395.3 355.8 L394.6 353.3 L394.0 350.9 L393.6 348.6 L393.3 346.5 L393.1 344.5 L393.0 342.6 L393.0 340.9 L393.1 339.3 L393.2 337.8 L394.0 334.9 L395.5 332.8 L397.0 331.2 L398.0 330.0Z" fill="#e2e2e2"/>
<clipPath id="cpStand"><path d="M405.0 325.3 L406.1 325.4 L407.5 325.6 L409.0 325.8 L410.6 326.0 L412.4 326.2 L414.4 326.4 L416.4 326.6 L418.6 326.9 L420.8 327.1 L423.1 327.4 L425.5 327.7 L427.9 328.0 L430.3 328.3 L432.8 328.6 L435.2 328.9 L437.6 329.2 L440.0 329.5 L441.8 329.8 L443.7 330.0 L445.5 330.3 L447.4 330.6 L449.2 330.9 L451.1 331.2 L453.1 331.5 L455.0 331.8 L456.9 332.2 L458.9 332.5 L460.9 332.8 L462.9 333.2 L465.0 333.5 L467.1 333.8 L469.2 334.1 L471.4 334.4 L473.5 334.7 L475.8 335.0 L478.0 335.3 L480.3 335.5 L482.6 335.8 L485.0 336.0 L486.8 336.2 L488.6 336.3 L490.4 336.5 L492.3 336.6 L494.2 336.8 L496.1 336.9 L498.0 337.0 L500.0 337.2 L502.0 337.3 L504.0 337.4 L506.0 337.5 L508.0 337.7 L510.1 337.8 L512.1 337.9 L514.2 338.0 L516.3 338.1 L518.4 338.2 L520.5 338.3 L522.5 338.4 L524.6 338.5 L526.7 338.5 L528.8 338.6 L530.9 338.7 L533.0 338.7 L535.1 338.8 L537.1 338.8 L539.2 338.9 L541.3 338.9 L543.3 339.0 L545.3 339.0 L547.3 339.0 L549.3 339.0 L551.4 339.1 L553.4 339.1 L555.5 339.1 L557.6 339.1 L559.7 339.1 L561.8 339.1 L563.8 339.1 L565.9 339.1 L568.0 339.0 L570.1 339.0 L572.2 339.0 L574.3 339.0 L576.3 338.9 L578.4 338.9 L580.5 338.8 L582.5 338.8 L584.5 338.7 L586.5 338.6 L588.5 338.6 L590.5 338.5 L592.5 338.4 L594.4 338.3 L596.3 338.2 L598.2 338.1 L600.1 338.0 L601.9 337.9 L603.7 337.7 L605.5 337.6 L607.9 337.4 L610.2 337.2 L612.5 336.9 L614.8 336.7 L617.0 336.4 L619.2 336.1 L621.4 335.8 L623.5 335.4 L625.7 335.1 L627.7 334.7 L629.8 334.4 L631.8 334.0 L633.8 333.7 L635.8 333.3 L637.7 333.0 L639.7 332.6 L641.5 332.3 L643.4 332.0 L645.3 331.7 L647.1 331.4 L648.9 331.1 L650.7 330.8 L653.2 330.4 L655.6 330.1 L658.1 329.7 L660.6 329.4 L663.0 329.1 L665.5 328.7 L667.8 328.4 L670.1 328.1 L672.3 327.8 L674.3 327.6 L676.3 327.3 L678.1 327.1 L679.8 326.8 L681.3 326.6 L682.7 326.5 L683.8 326.3 L689.8 331.5 L690.1 332.6 L690.5 334.0 L690.9 335.7 L691.4 337.5 L692.0 339.5 L692.6 341.6 L693.2 343.9 L693.8 346.1 L694.3 348.4 L694.8 350.7 L695.2 352.9 L695.6 355.0 L695.8 357.0 L695.9 359.1 L696.0 361.2 L696.0 363.3 L696.0 365.4 L695.9 367.4 L695.7 369.5 L695.5 371.6 L695.3 373.6 L695.1 375.6 L694.8 377.5 L694.6 379.4 L694.3 381.2 L694.0 383.5 L691.3 383.5 L690.3 383.5 L689.2 383.6 L688.0 383.6 L686.8 383.7 L685.5 383.7 L684.2 383.8 L682.8 383.8 L681.3 383.9 L679.8 383.9 L678.3 384.0 L676.7 384.1 L675.0 384.1 L673.3 384.2 L671.6 384.3 L669.8 384.4 L668.0 384.4 L666.1 384.5 L664.2 384.6 L662.3 384.7 L660.3 384.8 L658.3 384.9 L656.3 384.9 L654.2 385.0 L652.1 385.1 L650.0 385.2 L647.9 385.3 L645.7 385.4 L643.5 385.5 L641.3 385.6 L639.0 385.7 L636.8 385.8 L634.5 385.8 L632.2 385.9 L629.9 386.0 L627.6 386.1 L625.3 386.2 L623.0 386.3 L620.6 386.4 L618.3 386.5 L615.9 386.6 L613.6 386.6 L611.2 386.7 L608.9 386.8 L606.5 386.9 L604.2 387.0 L601.9 387.0 L599.5 387.1 L597.2 387.2 L594.9 387.3 L592.6 387.3 L590.3 387.4 L588.0 387.5 L585.7 387.5 L583.5 387.6 L581.3 387.6 L579.1 387.7 L576.9 387.7 L574.7 387.8 L572.6 387.8 L570.5 387.9 L568.4 387.9 L566.4 387.9 L564.3 388.0 L562.4 388.0 L560.4 388.0 L558.3 388.0 L556.2 388.0 L554.0 388.0 L551.9 388.0 L549.7 388.0 L547.5 388.0 L545.3 388.0 L543.1 388.0 L540.9 388.0 L538.7 388.0 L536.5 388.0 L534.2 387.9 L532.0 387.9 L529.7 387.9 L527.5 387.8 L525.2 387.8 L523.0 387.8 L520.7 387.7 L518.5 387.7 L516.2 387.6 L514.0 387.6 L511.7 387.5 L509.5 387.5 L507.3 387.4 L505.0 387.4 L502.8 387.3 L500.6 387.3 L498.4 387.2 L496.2 387.2 L494.0 387.1 L491.9 387.1 L489.7 387.0 L487.6 386.9 L485.5 386.9 L483.4 386.8 L481.3 386.8 L479.2 386.7 L477.2 386.6 L475.2 386.6 L473.2 386.5 L471.2 386.5 L469.3 386.4 L467.4 386.4 L465.5 386.3 L463.7 386.3 L461.8 386.2 L460.0 386.2 L458.3 386.1 L456.5 386.1 L454.8 386.0 L453.2 386.0 L451.6 385.9 L450.0 385.9 L448.4 385.9 L446.9 385.8 L445.4 385.8 L444.0 385.8 L442.6 385.7 L441.3 385.7 L440.0 385.7 L435.5 385.6 L431.5 385.6 L428.0 385.6 L425.0 385.6 L422.3 385.6 L420.1 385.6 L418.1 385.7 L416.4 385.7 L414.9 385.7 L413.6 385.8 L412.5 385.8 L411.5 385.9 L410.6 385.9 L409.7 386.0 L408.8 386.0 L407.8 386.0 L407.8 385.0 L406.7 382.8 L405.7 380.7 L404.7 378.5 L403.7 376.4 L402.7 374.3 L401.8 372.3 L400.9 370.3 L400.0 368.3 L399.2 366.3 L398.4 364.4 L397.7 362.6 L397.0 360.8 L396.4 359.1 L395.8 357.4 L395.3 355.8 L394.6 353.3 L394.0 350.9 L393.6 348.6 L393.3 346.5 L393.1 344.5 L393.0 342.6 L393.0 340.9 L393.1 339.3 L393.2 337.8 L394.0 334.9 L395.5 332.8 L397.0 331.2 L398.0 330.0Z"/></clipPath>
<g clip-path="url(#cpStand)">
<path d="M380 320 H700 V350 H380Z" fill="#e6e6e6" filter="url(#blr2)"/>
<path d="M392 332 Q415 324 442 334 Q440 350 425 360 Q414 372 412 392 L394 392Z" fill="#b0b0b0" filter="url(#blr2)"/>
<path d="M653 338 Q672 326 696 330 L698 392 L684 392 Q686 372 674 360 Q656 352 653 338Z" fill="#b0b0b0" filter="url(#blr2)"/>
<path d="M393.0 320V392" stroke="#969696" stroke-width=".8" opacity="0.7"/><path d="M395.0 320V392" stroke="#969696" stroke-width=".8" opacity="0.85"/><path d="M396.7 320V392" stroke="#969696" stroke-width=".8" opacity="0.45"/><path d="M398.4 320V392" stroke="#969696" stroke-width=".8" opacity="0.7"/><path d="M400.1 320V392" stroke="#969696" stroke-width=".8" opacity="1"/><path d="M402.1 320V392" stroke="#969696" stroke-width=".8" opacity="0.45"/><path d="M403.8 320V392" stroke="#969696" stroke-width=".8" opacity="0.85"/><path d="M406.4 320V392" stroke="#969696" stroke-width=".8" opacity="0.45"/><path d="M408.4 320V392" stroke="#969696" stroke-width=".8" opacity="0.45"/><path d="M411.0 320V392" stroke="#969696" stroke-width=".8" opacity="0.45"/><path d="M412.7 320V392" stroke="#969696" stroke-width=".8" opacity="0.6"/><path d="M414.4 320V392" stroke="#969696" stroke-width=".8" opacity="1"/><path d="M417.0 320V392" stroke="#969696" stroke-width=".8" opacity="0.45"/><path d="M419.0 320V392" stroke="#969696" stroke-width=".8" opacity="0.45"/><path d="M421.0 320V392" stroke="#969696" stroke-width=".8" opacity="0.7"/><path d="M423.6 320V392" stroke="#969696" stroke-width=".8" opacity="0.6"/><path d="M425.3 320V392" stroke="#969696" stroke-width=".8" opacity="1"/><path d="M427.6 320V392" stroke="#969696" stroke-width=".8" opacity="1"/><path d="M429.6 320V392" stroke="#969696" stroke-width=".8" opacity="0.45"/><path d="M431.6 320V392" stroke="#969696" stroke-width=".8" opacity="0.7"/><path d="M433.3 320V392" stroke="#969696" stroke-width=".8" opacity="1"/><path d="M435.0 320V392" stroke="#969696" stroke-width=".8" opacity="1"/><path d="M436.7 320V392" stroke="#969696" stroke-width=".8" opacity="1"/><path d="M438.7 320V392" stroke="#969696" stroke-width=".8" opacity="0.85"/><path d="M441.3 320V392" stroke="#969696" stroke-width=".8" opacity="0.7"/><path d="M443.9 320V392" stroke="#969696" stroke-width=".8" opacity="1"/><path d="M446.5 320V392" stroke="#969696" stroke-width=".8" opacity="0.7"/><path d="M448.8 320V392" stroke="#969696" stroke-width=".8" opacity="0.6"/><path d="M450.8 320V392" stroke="#969696" stroke-width=".8" opacity="0.6"/><path d="M452.5 320V392" stroke="#969696" stroke-width=".8" opacity="1"/><path d="M454.8 320V392" stroke="#969696" stroke-width=".8" opacity="1"/><path d="M457.4 320V392" stroke="#969696" stroke-width=".8" opacity="0.7"/><path d="M460.0 320V392" stroke="#969696" stroke-width=".8" opacity="0.7"/><path d="M461.7 320V392" stroke="#969696" stroke-width=".8" opacity="0.45"/><path d="M464.3 320V392" stroke="#969696" stroke-width=".8" opacity="0.6"/><path d="M466.6 320V392" stroke="#969696" stroke-width=".8" opacity="0.6"/><path d="M469.2 320V392" stroke="#969696" stroke-width=".8" opacity="0.85"/><path d="M470.9 320V392" stroke="#969696" stroke-width=".8" opacity="0.45"/><path d="M473.2 320V392" stroke="#969696" stroke-width=".8" opacity="0.7"/><path d="M475.5 320V392" stroke="#969696" stroke-width=".8" opacity="1"/><path d="M478.1 320V392" stroke="#969696" stroke-width=".8" opacity="1"/><path d="M480.7 320V392" stroke="#969696" stroke-width=".8" opacity="0.45"/><path d="M482.4 320V392" stroke="#969696" stroke-width=".8" opacity="0.7"/><path d="M485.0 320V392" stroke="#969696" stroke-width=".8" opacity="0.45"/><path d="M486.7 320V392" stroke="#969696" stroke-width=".8" opacity="0.7"/><path d="M489.3 320V392" stroke="#969696" stroke-width=".8" opacity="0.7"/><path d="M491.9 320V392" stroke="#969696" stroke-width=".8" opacity="0.7"/><path d="M493.6 320V392" stroke="#969696" stroke-width=".8" opacity="0.85"/><path d="M495.9 320V392" stroke="#969696" stroke-width=".8" opacity="0.6"/><path d="M497.6 320V392" stroke="#969696" stroke-width=".8" opacity="0.85"/><path d="M499.3 320V392" stroke="#969696" stroke-width=".8" opacity="0.6"/><path d="M501.6 320V392" stroke="#969696" stroke-width=".8" opacity="0.6"/><path d="M503.6 320V392" stroke="#969696" stroke-width=".8" opacity="0.85"/><path d="M506.2 320V392" stroke="#969696" stroke-width=".8" opacity="0.85"/><path d="M507.9 320V392" stroke="#969696" stroke-width=".8" opacity="0.6"/><path d="M510.5 320V392" stroke="#969696" stroke-width=".8" opacity="0.85"/><path d="M512.8 320V392" stroke="#969696" stroke-width=".8" opacity="0.6"/><path d="M515.4 320V392" stroke="#969696" stroke-width=".8" opacity="1"/><path d="M517.7 320V392" stroke="#969696" stroke-width=".8" opacity="0.85"/><path d="M520.0 320V392" stroke="#969696" stroke-width=".8" opacity="0.85"/><path d="M522.0 320V392" stroke="#969696" stroke-width=".8" opacity="0.6"/><path d="M523.7 320V392" stroke="#969696" stroke-width=".8" opacity="0.6"/><path d="M525.7 320V392" stroke="#969696" stroke-width=".8" opacity="0.6"/><path d="M527.7 320V392" stroke="#969696" stroke-width=".8" opacity="0.45"/><path d="M530.3 320V392" stroke="#969696" stroke-width=".8" opacity="1"/><path d="M532.3 320V392" stroke="#969696" stroke-width=".8" opacity="0.7"/><path d="M534.6 320V392" stroke="#969696" stroke-width=".8" opacity="0.45"/><path d="M536.6 320V392" stroke="#969696" stroke-width=".8" opacity="0.85"/><path d="M538.9 320V392" stroke="#969696" stroke-width=".8" opacity="1"/><path d="M541.2 320V392" stroke="#969696" stroke-width=".8" opacity="0.6"/><path d="M542.9 320V392" stroke="#969696" stroke-width=".8" opacity="0.85"/><path d="M545.5 320V392" stroke="#969696" stroke-width=".8" opacity="0.85"/><path d="M548.1 320V392" stroke="#969696" stroke-width=".8" opacity="0.85"/><path d="M549.8 320V392" stroke="#969696" stroke-width=".8" opacity="0.85"/><path d="M552.4 320V392" stroke="#969696" stroke-width=".8" opacity="0.45"/><path d="M554.4 320V392" stroke="#969696" stroke-width=".8" opacity="0.45"/><path d="M556.4 320V392" stroke="#969696" stroke-width=".8" opacity="0.85"/><path d="M558.4 320V392" stroke="#969696" stroke-width=".8" opacity="0.45"/><path d="M560.7 320V392" stroke="#969696" stroke-width=".8" opacity="1"/><path d="M562.4 320V392" stroke="#969696" stroke-width=".8" opacity="0.45"/><path d="M564.1 320V392" stroke="#969696" stroke-width=".8" opacity="1"/><path d="M566.1 320V392" stroke="#969696" stroke-width=".8" opacity="1"/><path d="M567.8 320V392" stroke="#969696" stroke-width=".8" opacity="0.7"/><path d="M569.5 320V392" stroke="#969696" stroke-width=".8" opacity="0.45"/><path d="M571.5 320V392" stroke="#969696" stroke-width=".8" opacity="1"/><path d="M574.1 320V392" stroke="#969696" stroke-width=".8" opacity="0.6"/><path d="M576.4 320V392" stroke="#969696" stroke-width=".8" opacity="0.7"/><path d="M578.7 320V392" stroke="#969696" stroke-width=".8" opacity="0.85"/><path d="M580.4 320V392" stroke="#969696" stroke-width=".8" opacity="0.45"/><path d="M583.0 320V392" stroke="#969696" stroke-width=".8" opacity="0.85"/><path d="M585.6 320V392" stroke="#969696" stroke-width=".8" opacity="0.85"/><path d="M587.9 320V392" stroke="#969696" stroke-width=".8" opacity="0.45"/><path d="M589.9 320V392" stroke="#969696" stroke-width=".8" opacity="0.45"/><path d="M592.2 320V392" stroke="#969696" stroke-width=".8" opacity="0.7"/><path d="M594.8 320V392" stroke="#969696" stroke-width=".8" opacity="0.6"/><path d="M596.5 320V392" stroke="#969696" stroke-width=".8" opacity="0.6"/><path d="M598.8 320V392" stroke="#969696" stroke-width=".8" opacity="0.6"/><path d="M600.5 320V392" stroke="#969696" stroke-width=".8" opacity="1"/><path d="M602.8 320V392" stroke="#969696" stroke-width=".8" opacity="0.45"/><path d="M605.1 320V392" stroke="#969696" stroke-width=".8" opacity="1"/><path d="M607.4 320V392" stroke="#969696" stroke-width=".8" opacity="0.6"/><path d="M609.7 320V392" stroke="#969696" stroke-width=".8" opacity="0.6"/><path d="M612.0 320V392" stroke="#969696" stroke-width=".8" opacity="0.6"/><path d="M614.0 320V392" stroke="#969696" stroke-width=".8" opacity="0.6"/><path d="M616.6 320V392" stroke="#969696" stroke-width=".8" opacity="0.6"/><path d="M618.6 320V392" stroke="#969696" stroke-width=".8" opacity="1"/><path d="M621.2 320V392" stroke="#969696" stroke-width=".8" opacity="0.7"/><path d="M622.9 320V392" stroke="#969696" stroke-width=".8" opacity="0.45"/><path d="M625.2 320V392" stroke="#969696" stroke-width=".8" opacity="0.85"/><path d="M627.5 320V392" stroke="#969696" stroke-width=".8" opacity="0.6"/><path d="M629.8 320V392" stroke="#969696" stroke-width=".8" opacity="0.85"/><path d="M632.1 320V392" stroke="#969696" stroke-width=".8" opacity="0.7"/><path d="M633.8 320V392" stroke="#969696" stroke-width=".8" opacity="0.6"/><path d="M635.5 320V392" stroke="#969696" stroke-width=".8" opacity="0.6"/><path d="M638.1 320V392" stroke="#969696" stroke-width=".8" opacity="0.6"/><path d="M640.4 320V392" stroke="#969696" stroke-width=".8" opacity="0.6"/><path d="M643.0 320V392" stroke="#969696" stroke-width=".8" opacity="1"/><path d="M644.7 320V392" stroke="#969696" stroke-width=".8" opacity="0.85"/><path d="M647.0 320V392" stroke="#969696" stroke-width=".8" opacity="0.45"/><path d="M648.7 320V392" stroke="#969696" stroke-width=".8" opacity="0.85"/><path d="M650.7 320V392" stroke="#969696" stroke-width=".8" opacity="0.85"/><path d="M652.7 320V392" stroke="#969696" stroke-width=".8" opacity="0.85"/><path d="M655.0 320V392" stroke="#969696" stroke-width=".8" opacity="0.45"/><path d="M657.6 320V392" stroke="#969696" stroke-width=".8" opacity="0.85"/><path d="M660.2 320V392" stroke="#969696" stroke-width=".8" opacity="0.45"/><path d="M662.2 320V392" stroke="#969696" stroke-width=".8" opacity="0.6"/><path d="M664.2 320V392" stroke="#969696" stroke-width=".8" opacity="0.45"/><path d="M666.2 320V392" stroke="#969696" stroke-width=".8" opacity="1"/><path d="M668.8 320V392" stroke="#969696" stroke-width=".8" opacity="0.6"/><path d="M671.4 320V392" stroke="#969696" stroke-width=".8" opacity="0.7"/><path d="M673.4 320V392" stroke="#969696" stroke-width=".8" opacity="1"/><path d="M675.4 320V392" stroke="#969696" stroke-width=".8" opacity="0.45"/><path d="M677.1 320V392" stroke="#969696" stroke-width=".8" opacity="0.45"/><path d="M679.1 320V392" stroke="#969696" stroke-width=".8" opacity="0.85"/><path d="M681.1 320V392" stroke="#969696" stroke-width=".8" opacity="0.6"/><path d="M682.8 320V392" stroke="#969696" stroke-width=".8" opacity="0.7"/><path d="M684.8 320V392" stroke="#969696" stroke-width=".8" opacity="0.7"/><path d="M686.8 320V392" stroke="#969696" stroke-width=".8" opacity="1"/><path d="M689.1 320V392" stroke="#969696" stroke-width=".8" opacity="0.7"/><path d="M691.7 320V392" stroke="#969696" stroke-width=".8" opacity="0.6"/><path d="M693.4 320V392" stroke="#969696" stroke-width=".8" opacity="0.7"/><path d="M696.0 320V392" stroke="#969696" stroke-width=".8" opacity="1"/>
</g>
<path d="M407.8 386.0 L408.8 386.0 L409.7 386.0 L410.6 385.9 L411.5 385.9 L412.5 385.8 L413.6 385.8 L414.9 385.7 L416.4 385.7 L418.1 385.7 L420.1 385.6 L422.3 385.6 L425.0 385.6 L428.0 385.6 L431.5 385.6 L435.5 385.6 L440.0 385.7 L441.3 385.7 L442.6 385.7 L444.0 385.8 L445.4 385.8 L446.9 385.8 L448.4 385.9 L450.0 385.9 L451.6 385.9 L453.2 386.0 L454.8 386.0 L456.5 386.1 L458.3 386.1 L460.0 386.2 L461.8 386.2 L463.7 386.3 L465.5 386.3 L467.4 386.4 L469.3 386.4 L471.2 386.5 L473.2 386.5 L475.2 386.6 L477.2 386.6 L479.2 386.7 L481.3 386.8 L483.4 386.8 L485.5 386.9 L487.6 386.9 L489.7 387.0 L491.9 387.1 L494.0 387.1 L496.2 387.2 L498.4 387.2 L500.6 387.3 L502.8 387.3 L505.0 387.4 L507.3 387.4 L509.5 387.5 L511.7 387.5 L514.0 387.6 L516.2 387.6 L518.5 387.7 L520.7 387.7 L523.0 387.8 L525.2 387.8 L527.5 387.8 L529.7 387.9 L532.0 387.9 L534.2 387.9 L536.5 388.0 L538.7 388.0 L540.9 388.0 L543.1 388.0 L545.3 388.0 L547.5 388.0 L549.7 388.0 L551.9 388.0 L554.0 388.0 L556.2 388.0 L558.3 388.0 L560.4 388.0 L562.4 388.0 L564.3 388.0 L566.4 387.9 L568.4 387.9 L570.5 387.9 L572.6 387.8 L574.7 387.8 L576.9 387.7 L579.1 387.7 L581.3 387.6 L583.5 387.6 L585.7 387.5 L588.0 387.5 L590.3 387.4 L592.6 387.3 L594.9 387.3 L597.2 387.2 L599.5 387.1 L601.9 387.0 L604.2 387.0 L606.5 386.9 L608.9 386.8 L611.2 386.7 L613.6 386.6 L615.9 386.6 L618.3 386.5 L620.6 386.4 L623.0 386.3 L625.3 386.2 L627.6 386.1 L629.9 386.0 L632.2 385.9 L634.5 385.8 L636.8 385.8 L639.0 385.7 L641.3 385.6 L643.5 385.5 L645.7 385.4 L647.9 385.3 L650.0 385.2 L652.1 385.1 L654.2 385.0 L656.3 384.9 L658.3 384.9 L660.3 384.8 L662.3 384.7 L664.2 384.6 L666.1 384.5 L668.0 384.4 L669.8 384.4 L671.6 384.3 L673.3 384.2 L675.0 384.1 L676.7 384.1 L678.3 384.0 L679.8 383.9 L681.3 383.9 L682.8 383.8 L684.2 383.8 L685.5 383.7 L686.8 383.7 L688.0 383.6 L689.2 383.6 L690.3 383.5 L691.3 383.5 L689.0 401.7 L688.0 401.7 L686.9 401.7 L685.7 401.8 L684.5 401.8 L683.3 401.8 L682.0 401.8 L680.6 401.9 L679.2 401.9 L677.7 401.9 L676.2 401.9 L674.7 402.0 L673.1 402.0 L671.5 402.0 L669.8 402.1 L668.1 402.1 L666.3 402.2 L664.5 402.2 L662.7 402.2 L660.8 402.3 L658.9 402.3 L657.0 402.4 L655.0 402.4 L653.0 402.4 L651.0 402.5 L648.9 402.5 L646.8 402.6 L644.7 402.6 L642.6 402.7 L640.4 402.7 L638.2 402.8 L636.0 402.8 L633.8 402.8 L631.6 402.9 L629.3 402.9 L627.0 403.0 L624.7 403.0 L622.4 403.1 L620.1 403.1 L617.8 403.2 L615.5 403.2 L613.1 403.3 L610.8 403.3 L608.4 403.4 L606.0 403.4 L603.7 403.5 L601.3 403.5 L598.9 403.5 L596.6 403.6 L594.2 403.6 L591.8 403.7 L589.5 403.7 L587.1 403.8 L584.8 403.8 L582.4 403.8 L580.1 403.9 L577.8 403.9 L575.5 403.9 L573.2 404.0 L570.9 404.0 L568.6 404.0 L566.4 404.1 L564.1 404.1 L561.9 404.1 L559.7 404.2 L557.5 404.2 L555.4 404.2 L553.2 404.2 L551.1 404.3 L549.1 404.3 L547.0 404.3 L545.0 404.3 L543.0 404.3 L541.0 404.4 L539.1 404.4 L537.2 404.4 L535.4 404.4 L533.5 404.4 L531.7 404.4 L530.0 404.4 L527.6 404.4 L525.2 404.4 L522.8 404.4 L520.4 404.4 L518.0 404.4 L515.5 404.4 L513.1 404.3 L510.7 404.3 L508.3 404.3 L505.9 404.3 L503.5 404.2 L501.1 404.2 L498.7 404.2 L496.3 404.1 L493.9 404.1 L491.5 404.0 L489.1 404.0 L486.8 403.9 L484.4 403.9 L482.1 403.8 L479.8 403.8 L477.5 403.7 L475.2 403.7 L473.0 403.6 L470.7 403.6 L468.5 403.5 L466.3 403.5 L464.1 403.4 L462.0 403.3 L459.9 403.3 L457.8 403.2 L455.7 403.2 L453.6 403.1 L451.6 403.0 L449.6 403.0 L447.7 402.9 L445.8 402.9 L443.9 402.8 L442.0 402.8 L440.2 402.7 L438.4 402.6 L436.7 402.6 L435.0 402.5 L433.4 402.5 L431.7 402.4 L430.2 402.4 L428.6 402.3 L427.1 402.3 L425.7 402.3 L424.3 402.2 L423.0 402.2 L421.7 402.1 L420.4 402.1 L419.2 402.1 L418.1 402.0 L417.0 402.0 L416.0 402.0Z" fill="#d2d2d2"/>
<path d="M411.0 390.8C435.8 391.2 513.2 393.4 560.0 393.0C606.8 392.6 670.0 389.1 692.0 388.3" fill="none" stroke="#5c5c5c" stroke-width="1" stroke-dasharray="2.3 1.6"/>
<path d="M415.0 398.3C439.2 398.6 514.2 400.5 560.0 400.3C605.8 400.1 668.3 397.8 690.0 397.3" fill="none" stroke="#5c5c5c" stroke-width="1" stroke-dasharray="2.3 1.6"/>
<path d="M407.8 386.0C413.2 385.9 414.6 385.4 440.0 385.7C465.4 386.0 518.5 388.4 560.4 388.0C602.3 387.6 669.5 384.2 691.3 383.5" fill="none" stroke="#1e1e1e" stroke-width="1.5"/>
<path d="M416.0 402.0C435.0 402.4 484.5 404.4 530.0 404.4C575.5 404.3 662.5 402.1 689.0 401.7" fill="none" stroke="#1e1e1e" stroke-width="1.5"/>
<rect x="499.3" y="474.8" width="103" height="37.8" fill="#f2f2f2" stroke="#1e1e1e" stroke-width="1.3"/>
<path d="M502.5 477v33" stroke="#222" stroke-width="1.4" stroke-dasharray="3.2 2"/>
<path d="M598.5 477v33" stroke="#888" stroke-width=".9" stroke-dasharray="2 1.5"/>
<path d="M538.5 512.6 V534.8 H562.2 V512.6" fill="#f0f0f0" stroke="#1e1e1e" stroke-width="1.2"/>
<path d="M562.2 514 Q566 524 562.2 534" fill="none" stroke="#555" stroke-width="1"/>
<path d="M440 580 L475 566 L507 541 L522 528 L527 537 L505 562 L455 588Z" fill="#e4e4e4" filter="url(#blr)"/>
<path d="M520.0 520.0 L547.4 521.5 L549.6 600.0 L552.0 636.0 L514.0 735.0 L510.0 759.0 L510.0 758.0 L510.1 756.8 L510.2 755.6 L510.4 754.3 L510.5 752.9 L510.7 751.3 L510.8 749.6 L510.9 747.8 L511.1 745.8 L511.2 743.7 L511.2 741.4 L511.3 738.9 L511.3 736.2 L511.3 733.4 L511.2 730.3 L511.0 727.0 L510.9 725.5 L510.8 724.0 L510.7 722.5 L510.6 720.9 L510.5 719.2 L510.3 717.5 L510.2 715.8 L510.0 714.0 L509.9 712.1 L509.7 710.3 L509.5 708.4 L509.4 706.5 L509.2 704.5 L509.0 702.5 L508.8 700.5 L508.6 698.4 L508.4 696.3 L508.2 694.2 L508.0 692.1 L507.8 690.0 L507.5 687.8 L507.3 685.6 L507.1 683.5 L506.9 681.3 L506.7 679.0 L506.4 676.8 L506.2 674.6 L506.0 672.3 L505.8 670.1 L505.6 667.9 L505.4 665.6 L505.2 663.4 L505.0 661.1 L504.8 658.9 L504.6 656.6 L504.4 654.4 L504.2 652.2 L504.0 650.0 L503.8 648.1 L503.7 646.2 L503.5 644.2 L503.4 642.3 L503.2 640.2 L503.1 638.2 L502.9 636.1 L502.7 634.0 L502.6 631.8 L502.4 629.7 L502.2 627.5 L502.1 625.3 L501.9 623.1 L501.7 620.9 L501.6 618.7 L501.4 616.4 L501.2 614.2 L501.1 612.0 L500.9 609.7 L500.7 607.5 L500.6 605.3 L500.4 603.0 L500.3 600.8 L500.1 598.6 L499.9 596.5 L499.8 594.3 L499.6 592.2 L499.5 590.0 L499.3 588.0 L499.2 585.9 L499.1 583.9 L498.9 581.9 L498.8 579.9 L498.7 578.0 L498.5 576.1 L498.4 574.2 L498.3 572.4 L498.2 570.7 L498.1 569.0 L498.0 567.3 L497.9 565.8 L497.8 564.2 L497.7 562.8 L497.6 561.3 L497.5 560.0 L497.3 556.0 L497.1 552.5 L497.0 549.4 L496.9 546.7 L496.9 544.3 L496.8 542.2 L496.8 540.4 L496.9 538.8 L496.9 537.4 L496.9 536.2 L497.0 535.0 L497.0 534.0 L497.0 533.0 L497.0 532.0Z" fill="#fdfdfd"/>
<path d="M548 608 L553 636 L535 680 L518 725 L516 690 L530 640 Z" fill="#e2e2e2" filter="url(#blr)"/>
<path d="M497.0 532.0C497.1 536.7 496.3 540.3 497.5 560.0C498.7 579.7 501.8 622.2 504.0 650.0C506.2 677.8 510.0 708.8 511.0 727.0C512.0 745.2 510.2 753.7 510.0 759.0" fill="none" stroke="#1e1e1e" stroke-width="1.6"/>
<path d="M547.4 521.5 L549.6 600 L552 636" fill="none" stroke="#1e1e1e" stroke-width="1.6"/>
<path d="M501.5 534.0C501.6 538.3 500.9 540.7 502.0 560.0C503.1 579.3 505.8 619.2 508.0 650.0C510.2 680.8 513.8 729.2 515.0 745.0" fill="none" stroke="#5a5a5a" stroke-width=".9" stroke-dasharray="2 1.5"/>
<path d="M519 520 L547.4 521.5" stroke="#1e1e1e" stroke-width="1.7"/>
<path d="M662.3 462.0 L641.3 494.6 L610.0 544.0 L584.0 584.0 L569.4 606.6 L647.0 563.0 L633.4 569.0 L633.5 567.9 L633.6 566.5 L633.6 565.0 L633.7 563.3 L633.8 561.5 L633.9 559.5 L634.1 557.4 L634.2 555.3 L634.3 553.0 L634.5 550.7 L634.6 548.3 L634.8 545.9 L635.0 543.5 L635.2 541.2 L635.4 538.8 L635.6 536.5 L635.8 534.3 L636.0 532.4 L636.2 530.5 L636.3 528.5 L636.5 526.6 L636.6 524.6 L636.7 522.5 L636.9 520.5 L637.0 518.4 L637.2 516.4 L637.4 514.3 L637.6 512.3 L637.8 510.2 L638.1 508.2 L638.4 506.1 L638.8 504.1 L639.2 502.2 L639.6 500.2 L640.1 498.3 L640.7 496.4 L641.3 494.6 L642.1 492.7 L643.0 490.7 L644.0 488.7 L645.1 486.7 L646.3 484.7 L647.5 482.7 L648.8 480.7 L650.1 478.7 L651.5 476.8 L652.8 474.9 L654.1 473.1 L655.4 471.3 L656.7 469.6 L657.9 468.1 L659.0 466.6 L660.0 465.2 L660.9 464.0 L661.7 462.9 L662.3 462.0Z" fill="#efefef"/>
<path d="M662.3 462.0 L661.7 462.9 L660.9 464.0 L660.0 465.2 L659.0 466.6 L657.9 468.1 L656.7 469.6 L655.4 471.3 L654.1 473.1 L652.8 474.9 L651.5 476.8 L650.1 478.7 L648.8 480.7 L647.5 482.7 L646.3 484.7 L645.1 486.7 L644.0 488.7 L643.0 490.7 L642.1 492.7 L641.3 494.6 L640.7 496.4 L640.1 498.3 L639.6 500.2 L639.2 502.2 L638.8 504.1 L638.4 506.1 L638.1 508.2 L637.8 510.2 L637.6 512.3 L637.4 514.3 L637.2 516.4 L637.0 518.4 L636.9 520.5 L636.7 522.5 L636.6 524.6 L636.5 526.6 L636.3 528.5 L636.2 530.5 L636.0 532.4 L635.8 534.3 L635.6 536.5 L635.4 538.8 L635.2 541.2 L635.0 543.5 L634.8 545.9 L634.6 548.3 L634.5 550.7 L634.3 553.0 L634.2 555.3 L634.1 557.4 L633.9 559.5 L633.8 561.5 L633.7 563.3 L633.6 565.0 L633.6 566.5 L633.5 567.9 L633.4 569.0 L650.5 566.0 L650.5 566.0 L650.8 567.2 L651.5 562.0 L651.6 560.8 L651.7 559.5 L651.7 558.0 L651.8 556.4 L651.9 554.7 L652.0 552.8 L652.1 550.9 L652.2 548.8 L652.3 546.7 L652.5 544.5 L652.6 542.2 L652.7 539.9 L652.8 537.6 L652.9 535.3 L653.0 532.9 L653.2 530.6 L653.3 528.3 L653.4 526.0 L653.6 523.7 L653.7 521.5 L653.8 519.3 L654.0 517.3 L654.1 515.3 L654.2 513.4 L654.4 511.6 L654.5 510.0 L654.7 507.3 L655.0 504.8 L655.3 502.4 L655.5 500.1 L655.8 497.9 L656.1 495.8 L656.4 493.8 L656.7 491.9 L657.0 490.1 L657.3 488.3 L657.6 486.6 L657.9 484.9 L658.2 483.2 L658.4 481.6 L658.7 480.0 L659.1 477.4 L659.6 474.8 L660.1 472.4 L660.5 470.2 L661.0 468.1 L661.4 466.2 L661.8 464.6 L662.1 463.1 L662.3 462.0Z" fill="#bcbcbc"/>
<path d="M662.3 462.0C658.8 467.4 645.7 482.6 641.3 494.6C636.9 506.7 637.1 521.9 635.8 534.3C634.5 546.7 633.8 563.2 633.4 569.0" fill="none" stroke="#1e1e1e" stroke-width="1.3"/>
<path d="M659.0 472.0C657.8 478.3 653.8 494.8 652.0 510.0C650.2 525.2 649.1 554.2 648.5 563.0" fill="none" stroke="#555" stroke-width=".9" stroke-dasharray="2 1.5"/>
<path d="M643.0 496.0C642.3 501.7 640.0 518.3 639.0 530.0C638.0 541.7 637.3 560.0 637.0 566.0" fill="none" stroke="#555" stroke-width=".9" stroke-dasharray="2 1.5"/>
<path d="M662 601 L751 589 L762 598 L705 612 L668 614Z" fill="#e8e8e8" filter="url(#blr)"/>
<path d="M662 620 L651 634 L600 668 L548 712 L524 745 L515 760 L528 760 L562 724 L612 690 L666 642Z" fill="#e3e3e3" filter="url(#blr)"/>
<path d="M569.4 606.6 L647 563 Q656 561 657.5 570 L660.8 612 Q661 622 649 626 Q620 640 596.6 661 Q560 685 538.3 705.8 Q522 720 514 735 Q540 670 569.4 606.6Z" fill="#fbfbfb" stroke="#1e1e1e" stroke-width="1.6"/>
<path d="M577 610 L645 571.5 Q651 571 652 577 L655 610 Q655 617 646 620 Q618 634 594 654 Q560 678 535 700 Q524 712 519 722" fill="none" stroke="#5a5a5a" stroke-width=".9" stroke-dasharray="2 1.5"/>
<path d="M635.5 585.3 L643 608.6" stroke="#1e1e1e" stroke-width="3.6"/><path d="M635.5 585.3 L643 608.6" stroke="#d0d0d0" stroke-width="1.4"/>
<path d="M550 649.4 L571.4 637.7" stroke="#1e1e1e" stroke-width="3.4"/><path d="M550 649.4 L571.4 637.7" stroke="#d5d5d5" stroke-width="1.3"/>
<path d="M663 460 L641.3 494.6 L610 544 L584 584 L569.4 606.6 Q540 670 514 735 L510 759" fill="none" stroke="#1e1e1e" stroke-width="1.7" stroke-linejoin="round"/>
<path d="M565.5 693 V759 H511" fill="none" stroke="#5a5a5a" stroke-width="1" stroke-dasharray="2.5 1.8"/>
<path d="M517 747.6 H563" fill="none" stroke="#5a5a5a" stroke-width="1" stroke-dasharray="2.5 1.8"/>
<path d="M405.0 325.3 L403.4 325.6 L401.2 326.1 L398.7 326.7 L396.5 327.6 L394.7 328.7 L393.1 330.0 L391.4 331.6 L389.5 333.5 L388.3 334.7 L387.2 335.9 L386.0 337.1 L384.8 338.6 L383.4 340.2 L381.8 342.2 L380.0 344.5 L379.0 345.7 L378.0 347.0 L377.0 348.4 L375.8 349.9 L374.7 351.4 L373.5 353.0 L372.3 354.7 L371.0 356.4 L369.7 358.1 L368.4 359.9 L367.1 361.6 L365.8 363.5 L364.5 365.3 L363.3 367.1 L362.0 369.0 L360.9 370.6 L359.8 372.3 L358.6 374.1 L357.4 376.0 L356.1 378.0 L354.9 380.0 L353.6 382.0 L352.4 384.0 L351.1 386.0 L349.9 388.0 L348.7 389.9 L347.6 391.7 L346.5 393.5 L345.6 395.1 L344.6 396.6 L343.8 397.9 L343.1 399.0 L342.5 399.0 L342.7 400.2 L342.8 401.6 L343.0 403.2 L343.2 405.1 L343.5 407.1 L343.8 409.4 L344.2 411.8 L344.7 414.4 L345.3 417.1 L346.0 420.0 L346.4 421.6 L346.9 423.3 L347.3 425.0 L347.8 426.8 L348.4 428.7 L348.9 430.6 L349.5 432.6 L350.1 434.6 L350.7 436.7 L351.4 438.8 L352.0 440.9 L352.7 443.1 L353.4 445.2 L354.1 447.4 L354.9 449.5 L355.6 451.7 L356.4 453.8 L357.2 455.9 L358.0 458.0 L358.7 459.8 L359.4 461.6 L360.2 463.5 L361.0 465.3 L361.8 467.2 L362.6 469.0 L363.4 470.9 L364.2 472.8 L365.1 474.7 L365.9 476.5 L366.8 478.4 L367.7 480.3 L368.6 482.2 L369.5 484.1 L370.4 486.0 L371.3 487.9 L372.3 489.8 L373.2 491.6 L374.1 493.5 L375.1 495.3 L376.0 497.2 L377.0 499.0 L378.0 500.8 L378.9 502.6 L379.9 504.4 L380.9 506.2 L381.9 508.0 L382.8 509.8 L383.8 511.6 L384.9 513.4 L385.9 515.2 L386.9 516.9 L387.9 518.7 L389.0 520.5 L390.0 522.2 L391.1 524.0 L392.2 525.8 L393.3 527.5 L394.4 529.3 L395.5 531.0 L396.6 532.8 L397.7 534.5 L398.8 536.3 L400.0 538.0 L401.1 539.7 L402.4 541.5 L403.6 543.3 L404.9 545.1 L406.3 547.0 L407.7 548.9 L409.1 550.8 L410.5 552.7 L411.9 554.6 L413.3 556.5 L414.7 558.3 L416.1 560.1 L417.5 561.9 L418.8 563.7 L420.1 565.4 L421.4 567.0 L422.6 568.5 L423.7 570.0 L424.7 571.3 L425.7 572.6 L426.6 573.7 L427.3 574.7 L428.0 575.6 L429.0 575.1 L430.3 574.6 L431.7 574.1 L433.2 573.4 L434.9 572.7 L436.6 572.0 L438.5 571.3 L440.5 570.4 L442.6 569.6 L444.7 568.7 L446.9 567.8 L449.0 566.8 L451.3 565.9 L453.5 564.9 L455.7 563.8 L457.9 562.8 L460.0 561.7 L462.1 560.7 L464.1 559.6 L466.0 558.5 L467.7 557.5 L469.5 556.4 L471.3 555.2 L473.1 554.1 L474.9 552.8 L476.7 551.6 L478.5 550.3 L480.4 548.9 L482.2 547.6 L484.0 546.3 L485.8 544.9 L487.6 543.6 L489.3 542.3 L491.1 541.0 L492.7 539.7 L494.4 538.4 L496.0 537.2 L497.5 536.1 L499.0 535.0 L500.4 533.9 L501.7 532.9 L503.0 532.0 L505.6 530.2 L508.0 528.5 L510.1 527.0 L512.1 525.6 L513.8 524.3 L515.4 523.2 L516.8 522.3 L518.0 521.4 L519.1 520.6 L520.0 520.0 L519.2 519.2 L518.4 518.3 L517.4 517.2 L516.3 516.1 L515.2 514.8 L513.9 513.4 L512.5 511.9 L511.1 510.4 L509.5 508.7 L507.8 506.9 L506.0 505.1 L504.1 503.1 L502.1 501.1 L500.0 499.0 L498.9 497.9 L497.7 496.8 L496.5 495.6 L495.2 494.4 L493.9 493.1 L492.5 491.8 L491.1 490.5 L489.6 489.2 L488.1 487.8 L486.6 486.4 L485.1 485.0 L483.5 483.5 L481.9 482.1 L480.3 480.6 L478.8 479.1 L477.2 477.7 L475.6 476.2 L474.0 474.7 L472.4 473.2 L470.8 471.7 L469.3 470.2 L467.7 468.7 L466.2 467.2 L464.7 465.7 L463.3 464.3 L461.9 462.8 L460.5 461.4 L459.2 460.0 L457.7 458.4 L456.3 456.9 L454.9 455.3 L453.4 453.7 L452.0 452.2 L450.6 450.6 L449.2 449.0 L447.9 447.4 L446.5 445.9 L445.2 444.3 L443.8 442.7 L442.5 441.2 L441.2 439.6 L439.9 438.0 L438.7 436.5 L437.4 434.9 L436.2 433.3 L435.0 431.8 L433.8 430.2 L432.7 428.7 L431.5 427.2 L430.4 425.6 L429.3 424.1 L428.2 422.6 L427.2 421.1 L425.9 419.2 L424.7 417.3 L423.5 415.5 L422.4 413.6 L421.3 411.7 L420.2 409.8 L419.2 408.0 L418.2 406.1 L417.2 404.3 L416.3 402.4 L415.4 400.6 L414.5 398.8 L413.6 397.0 L412.7 395.2 L411.9 393.5 L411.0 391.7 L410.2 390.0 L409.4 388.3 L408.6 386.6 L407.8 385.0 L406.7 382.8 L405.7 380.7 L404.7 378.5 L403.7 376.4 L402.7 374.3 L401.8 372.3 L400.9 370.3 L400.0 368.3 L399.2 366.3 L398.4 364.4 L397.7 362.6 L397.0 360.8 L396.4 359.1 L395.8 357.4 L395.3 355.8 L394.6 353.3 L394.0 350.9 L393.6 348.6 L393.3 346.5 L393.1 344.5 L393.0 342.6 L393.0 340.9 L393.1 339.3 L393.2 337.8 L394.0 334.9 L395.5 332.8 L397.0 331.2 L398.0 330.0Z" fill="#fcfcfc"/>
<clipPath id="cpLC"><path d="M405.0 325.3 L403.4 325.6 L401.2 326.1 L398.7 326.7 L396.5 327.6 L394.7 328.7 L393.1 330.0 L391.4 331.6 L389.5 333.5 L388.3 334.7 L387.2 335.9 L386.0 337.1 L384.8 338.6 L383.4 340.2 L381.8 342.2 L380.0 344.5 L379.0 345.7 L378.0 347.0 L377.0 348.4 L375.8 349.9 L374.7 351.4 L373.5 353.0 L372.3 354.7 L371.0 356.4 L369.7 358.1 L368.4 359.9 L367.1 361.6 L365.8 363.5 L364.5 365.3 L363.3 367.1 L362.0 369.0 L360.9 370.6 L359.8 372.3 L358.6 374.1 L357.4 376.0 L356.1 378.0 L354.9 380.0 L353.6 382.0 L352.4 384.0 L351.1 386.0 L349.9 388.0 L348.7 389.9 L347.6 391.7 L346.5 393.5 L345.6 395.1 L344.6 396.6 L343.8 397.9 L343.1 399.0 L342.5 399.0 L342.7 400.2 L342.8 401.6 L343.0 403.2 L343.2 405.1 L343.5 407.1 L343.8 409.4 L344.2 411.8 L344.7 414.4 L345.3 417.1 L346.0 420.0 L346.4 421.6 L346.9 423.3 L347.3 425.0 L347.8 426.8 L348.4 428.7 L348.9 430.6 L349.5 432.6 L350.1 434.6 L350.7 436.7 L351.4 438.8 L352.0 440.9 L352.7 443.1 L353.4 445.2 L354.1 447.4 L354.9 449.5 L355.6 451.7 L356.4 453.8 L357.2 455.9 L358.0 458.0 L358.7 459.8 L359.4 461.6 L360.2 463.5 L361.0 465.3 L361.8 467.2 L362.6 469.0 L363.4 470.9 L364.2 472.8 L365.1 474.7 L365.9 476.5 L366.8 478.4 L367.7 480.3 L368.6 482.2 L369.5 484.1 L370.4 486.0 L371.3 487.9 L372.3 489.8 L373.2 491.6 L374.1 493.5 L375.1 495.3 L376.0 497.2 L377.0 499.0 L378.0 500.8 L378.9 502.6 L379.9 504.4 L380.9 506.2 L381.9 508.0 L382.8 509.8 L383.8 511.6 L384.9 513.4 L385.9 515.2 L386.9 516.9 L387.9 518.7 L389.0 520.5 L390.0 522.2 L391.1 524.0 L392.2 525.8 L393.3 527.5 L394.4 529.3 L395.5 531.0 L396.6 532.8 L397.7 534.5 L398.8 536.3 L400.0 538.0 L401.1 539.7 L402.4 541.5 L403.6 543.3 L404.9 545.1 L406.3 547.0 L407.7 548.9 L409.1 550.8 L410.5 552.7 L411.9 554.6 L413.3 556.5 L414.7 558.3 L416.1 560.1 L417.5 561.9 L418.8 563.7 L420.1 565.4 L421.4 567.0 L422.6 568.5 L423.7 570.0 L424.7 571.3 L425.7 572.6 L426.6 573.7 L427.3 574.7 L428.0 575.6 L429.0 575.1 L430.3 574.6 L431.7 574.1 L433.2 573.4 L434.9 572.7 L436.6 572.0 L438.5 571.3 L440.5 570.4 L442.6 569.6 L444.7 568.7 L446.9 567.8 L449.0 566.8 L451.3 565.9 L453.5 564.9 L455.7 563.8 L457.9 562.8 L460.0 561.7 L462.1 560.7 L464.1 559.6 L466.0 558.5 L467.7 557.5 L469.5 556.4 L471.3 555.2 L473.1 554.1 L474.9 552.8 L476.7 551.6 L478.5 550.3 L480.4 548.9 L482.2 547.6 L484.0 546.3 L485.8 544.9 L487.6 543.6 L489.3 542.3 L491.1 541.0 L492.7 539.7 L494.4 538.4 L496.0 537.2 L497.5 536.1 L499.0 535.0 L500.4 533.9 L501.7 532.9 L503.0 532.0 L505.6 530.2 L508.0 528.5 L510.1 527.0 L512.1 525.6 L513.8 524.3 L515.4 523.2 L516.8 522.3 L518.0 521.4 L519.1 520.6 L520.0 520.0 L519.2 519.2 L518.4 518.3 L517.4 517.2 L516.3 516.1 L515.2 514.8 L513.9 513.4 L512.5 511.9 L511.1 510.4 L509.5 508.7 L507.8 506.9 L506.0 505.1 L504.1 503.1 L502.1 501.1 L500.0 499.0 L498.9 497.9 L497.7 496.8 L496.5 495.6 L495.2 494.4 L493.9 493.1 L492.5 491.8 L491.1 490.5 L489.6 489.2 L488.1 487.8 L486.6 486.4 L485.1 485.0 L483.5 483.5 L481.9 482.1 L480.3 480.6 L478.8 479.1 L477.2 477.7 L475.6 476.2 L474.0 474.7 L472.4 473.2 L470.8 471.7 L469.3 470.2 L467.7 468.7 L466.2 467.2 L464.7 465.7 L463.3 464.3 L461.9 462.8 L460.5 461.4 L459.2 460.0 L457.7 458.4 L456.3 456.9 L454.9 455.3 L453.4 453.7 L452.0 452.2 L450.6 450.6 L449.2 449.0 L447.9 447.4 L446.5 445.9 L445.2 444.3 L443.8 442.7 L442.5 441.2 L441.2 439.6 L439.9 438.0 L438.7 436.5 L437.4 434.9 L436.2 433.3 L435.0 431.8 L433.8 430.2 L432.7 428.7 L431.5 427.2 L430.4 425.6 L429.3 424.1 L428.2 422.6 L427.2 421.1 L425.9 419.2 L424.7 417.3 L423.5 415.5 L422.4 413.6 L421.3 411.7 L420.2 409.8 L419.2 408.0 L418.2 406.1 L417.2 404.3 L416.3 402.4 L415.4 400.6 L414.5 398.8 L413.6 397.0 L412.7 395.2 L411.9 393.5 L411.0 391.7 L410.2 390.0 L409.4 388.3 L408.6 386.6 L407.8 385.0 L406.7 382.8 L405.7 380.7 L404.7 378.5 L403.7 376.4 L402.7 374.3 L401.8 372.3 L400.9 370.3 L400.0 368.3 L399.2 366.3 L398.4 364.4 L397.7 362.6 L397.0 360.8 L396.4 359.1 L395.8 357.4 L395.3 355.8 L394.6 353.3 L394.0 350.9 L393.6 348.6 L393.3 346.5 L393.1 344.5 L393.0 342.6 L393.0 340.9 L393.1 339.3 L393.2 337.8 L394.0 334.9 L395.5 332.8 L397.0 331.2 L398.0 330.0Z"/></clipPath>
<g clip-path="url(#cpLC)">
<path d="M409.2 322.5Q402.3 328.8 393.8 332.8M404.8 322.3Q400.3 328.8 394.4 334.1M399.3 322.1Q398.3 329.1 396.0 335.8M392.7 324.1Q396.2 329.9 398.7 336.1M387.7 328.6Q394.3 331.1 400.3 334.6M384.7 333.1Q392.4 332.5 400.0 333.6M382.3 336.7Q390.6 334.1 399.2 333.6M380.1 339.9Q388.9 335.7 398.6 334.4M377.9 342.9Q387.4 337.5 398.0 335.6M375.8 345.8Q385.9 339.4 397.7 336.9M373.6 348.7Q384.6 341.3 397.6 338.5M371.5 351.6Q383.4 343.2 397.6 340.2M369.4 354.4Q382.2 345.1 397.6 341.9M367.2 357.3Q381.0 347.1 397.8 343.8M365.1 360.1Q379.9 349.1 398.0 345.7M363.0 362.9Q378.9 351.1 398.3 347.6M361.0 365.8Q377.9 353.1 398.8 349.6M358.9 368.7Q377.0 355.2 399.3 351.6M356.9 371.6Q376.1 357.2 399.8 353.6M355.0 374.5Q375.3 359.3 400.5 355.7M353.0 377.5Q374.6 361.4 401.2 357.8M351.1 380.5Q373.9 363.5 402.0 359.9M349.2 383.4Q373.2 365.7 402.9 362.1M347.4 386.4Q372.6 367.8 403.8 364.2M345.5 389.4Q372.0 369.9 404.7 366.4M343.6 392.4Q371.4 372.1 405.7 368.7M341.8 395.4Q370.9 374.3 406.7 370.9M339.9 398.4Q370.3 376.5 407.7 373.2M337.8 400.8Q369.8 378.3 408.8 375.5M338.3 404.4Q370.4 381.1 409.9 377.8M338.7 408.0Q370.9 384.0 410.9 380.1M339.2 411.5Q371.6 386.8 412.1 382.4M339.9 415.1Q372.3 389.6 413.2 384.7M340.6 418.6Q373.1 392.5 414.4 387.1M341.4 422.1Q373.9 395.4 415.5 389.5M342.4 425.6Q374.8 398.3 416.7 391.9M343.3 429.0Q375.7 401.3 417.9 394.4M344.3 432.5Q376.7 404.2 419.1 396.9M345.3 435.9Q377.7 407.1 420.4 399.4M346.4 439.4Q378.7 410.0 421.6 401.9M347.4 442.8Q379.8 413.0 423.0 404.5M348.5 446.2Q381.0 415.9 424.4 407.0M349.7 449.6Q382.2 419.0 425.8 409.6M350.8 453.0Q383.4 422.0 427.4 412.1M352.1 456.3Q384.8 424.9 428.9 414.7M353.3 459.7Q386.2 427.9 430.6 417.2M354.6 463.0Q387.6 430.9 432.3 419.7M356.0 466.3Q389.1 433.8 434.1 422.2M357.4 469.6Q390.7 436.7 435.9 424.8M358.8 472.8Q392.3 439.7 437.8 427.3M360.3 476.1Q393.9 442.6 439.7 429.8M361.7 479.3Q395.6 445.5 441.7 432.3M363.3 482.6Q397.4 448.4 443.7 434.8M364.8 485.8Q399.1 451.3 445.8 437.3M366.3 489.0Q400.9 454.1 447.8 439.8M367.9 492.2Q402.7 457.0 450.0 442.3M369.5 495.4Q404.6 459.9 452.2 444.9M371.1 498.5Q406.5 462.7 454.4 447.4M372.8 501.7Q408.4 465.6 456.6 449.9M374.4 504.8Q410.3 468.4 458.9 452.4M376.1 507.9Q412.3 471.3 461.2 454.9M377.8 511.1Q414.3 474.1 463.5 457.5M379.6 514.2Q416.4 476.9 465.9 460.0M381.3 517.2Q418.5 479.7 468.4 462.5M383.1 520.3Q420.6 482.5 470.9 464.9M384.9 523.4Q422.7 485.3 473.4 467.4M386.7 526.4Q424.9 488.0 476.0 469.9M388.6 529.4Q427.1 490.8 478.6 472.3M390.4 532.5Q429.4 493.5 481.2 474.8M392.4 535.4Q431.7 496.2 483.9 477.3M394.3 538.4Q434.0 499.0 486.5 479.8M396.2 541.4Q436.3 501.7 489.2 482.3M398.2 544.3Q438.7 504.4 492.0 484.8M400.3 547.2Q441.1 507.1 494.7 487.3M402.4 550.1Q443.5 509.8 497.4 489.8M404.4 552.9Q445.9 512.5 500.2 492.4M406.6 555.7Q448.3 515.2 502.9 495.0M408.7 558.6Q450.7 518.0 505.6 497.7M410.8 561.4Q453.2 520.7 508.3 500.4M413.0 564.2Q455.6 523.5 511.0 503.1M415.1 567.0Q458.1 526.3 513.6 505.9M417.3 569.8Q460.5 529.1 516.3 508.8M419.4 572.6Q462.9 531.9 518.9 511.6M421.6 575.4Q465.4 534.7 521.6 514.5M423.7 578.2Q467.8 537.5 524.3 517.4" fill="none" stroke="#7e7e7e" stroke-width=".8"/>
</g>
<path d="M405.0 325.3C403.6 325.7 399.1 326.2 396.5 327.6C393.9 329.0 392.2 330.7 389.5 333.5C386.8 336.3 384.6 338.6 380.0 344.5C375.4 350.4 368.2 359.8 362.0 369.0C355.8 378.2 345.8 394.8 342.5 400.0M342.5 399.0C343.1 402.5 343.4 410.2 346.0 420.0C348.6 429.8 352.8 444.8 358.0 458.0C363.2 471.2 370.0 485.7 377.0 499.0C384.0 512.3 391.5 525.2 400.0 538.0C408.5 550.8 423.3 569.3 428.0 575.6" fill="none" stroke="#1e1e1e" stroke-width="1.9" stroke-linejoin="round"/>
<path d="M428.0 575.6C434.3 572.8 453.5 565.8 466.0 558.5C478.5 551.2 494.0 538.4 503.0 532.0C512.0 525.6 517.2 522.0 520.0 520.0" fill="none" stroke="#1e1e1e" stroke-width="1.9"/>
<path d="M398.0 330.0C397.2 331.3 393.6 333.5 393.2 337.8C392.8 342.1 392.9 347.9 395.3 355.8C397.7 363.7 402.5 374.1 407.8 385.0C413.1 395.9 418.6 408.6 427.2 421.1C435.8 433.6 447.1 447.0 459.2 460.0C471.3 473.0 489.9 489.0 500.0 499.0C510.1 509.0 516.7 516.5 520.0 520.0" fill="none" stroke="#1e1e1e" stroke-width="1.8"/>
<path d="M691.0 327.4 L691.8 328.2 L692.7 329.0 L693.6 329.9 L694.7 331.0 L695.9 332.1 L697.1 333.2 L698.4 334.5 L699.8 335.8 L701.3 337.2 L702.8 338.6 L704.3 340.1 L705.9 341.6 L707.6 343.2 L709.3 344.8 L711.0 346.4 L712.8 348.1 L714.5 349.8 L716.3 351.5 L718.1 353.2 L719.9 354.9 L721.7 356.6 L723.6 358.3 L725.4 360.1 L727.1 361.8 L728.9 363.5 L730.6 365.1 L732.4 366.8 L734.0 368.4 L735.7 370.0 L737.2 371.5 L738.8 373.0 L740.3 374.4 L741.7 375.8 L743.0 377.2 L744.3 378.4 L745.5 379.6 L746.6 380.7 L747.6 381.8 L748.6 382.7 L749.4 383.6 L753.8 387.6 L755.2 388.1 L754.8 387.5 L753.9 388.5 L753.6 393.3 L753.7 394.5 L753.7 395.8 L753.7 397.2 L753.8 398.7 L753.8 400.3 L753.8 401.9 L753.9 403.6 L753.9 405.4 L753.9 407.3 L753.9 409.2 L753.9 411.2 L753.9 413.2 L753.9 415.3 L753.8 417.4 L753.8 419.6 L753.8 421.8 L753.8 424.0 L753.8 426.2 L753.7 428.5 L753.7 430.8 L753.7 433.1 L753.6 435.4 L753.6 437.7 L753.6 440.0 L753.5 442.3 L753.5 444.6 L753.5 446.9 L753.4 449.2 L753.4 451.4 L753.4 453.6 L753.4 455.8 L753.3 457.9 L753.3 460.0 L753.3 462.0 L753.3 463.9 L753.2 465.9 L753.2 467.9 L753.2 470.0 L753.1 472.0 L753.1 474.0 L753.1 476.1 L753.0 478.1 L753.0 480.2 L753.0 482.2 L752.9 484.3 L752.9 486.4 L752.8 488.5 L752.8 490.5 L752.8 492.6 L752.7 494.7 L752.7 496.7 L752.6 498.8 L752.6 500.8 L752.5 502.9 L752.5 504.9 L752.5 506.9 L752.4 509.0 L752.4 511.0 L752.3 512.9 L752.3 514.9 L752.3 516.9 L752.2 518.8 L752.2 520.7 L752.1 522.6 L752.1 524.5 L752.1 526.4 L752.0 528.2 L752.0 530.0 L752.0 532.3 L751.9 534.7 L751.9 537.1 L751.8 539.5 L751.8 541.9 L751.7 544.4 L751.7 546.8 L751.7 549.2 L751.6 551.6 L751.6 554.0 L751.5 556.4 L751.5 558.7 L751.4 561.0 L751.4 563.2 L751.4 565.4 L751.3 567.6 L751.3 569.6 L751.2 571.6 L751.2 573.6 L751.2 575.4 L751.1 577.2 L751.1 578.8 L751.1 580.4 L751.1 581.8 L751.0 583.2 L751.0 584.4 L751.0 585.5 L700.0 593.0 L657.8 599.0 L657.5 597.8 L657.1 596.3 L656.6 594.4 L656.1 592.4 L655.5 590.1 L654.9 587.8 L654.3 585.4 L653.8 583.1 L653.2 580.8 L652.7 578.6 L652.3 576.7 L652.0 575.0 L651.6 572.6 L651.3 571.3 L651.2 570.2 L651.2 568.8 L651.3 566.3 L651.5 562.0 L651.6 560.7 L651.6 559.2 L651.7 557.6 L651.8 555.9 L651.8 554.1 L651.9 552.2 L652.0 550.2 L652.1 548.2 L652.2 546.0 L652.3 543.8 L652.5 541.6 L652.6 539.3 L652.7 537.1 L652.8 534.8 L653.0 532.5 L653.1 530.2 L653.2 527.9 L653.4 525.7 L653.5 523.5 L653.7 521.3 L653.8 519.2 L653.9 517.2 L654.1 515.2 L654.2 513.4 L654.4 511.6 L654.5 510.0 L654.7 507.3 L655.0 504.8 L655.3 502.4 L655.5 500.1 L655.8 497.9 L656.1 495.8 L656.4 493.8 L656.7 491.9 L657.0 490.1 L657.3 488.3 L657.6 486.6 L657.9 484.9 L658.2 483.2 L658.4 481.6 L658.7 480.0 L659.1 477.4 L659.6 474.8 L660.1 472.4 L660.5 470.2 L661.0 468.1 L661.4 466.2 L661.8 464.6 L662.1 463.1 L662.3 462.0 L671.0 446.7 L671.2 444.4 L672.1 442.6 L672.9 440.8 L673.8 438.9 L674.7 436.9 L675.6 434.9 L676.5 432.9 L677.4 430.9 L678.3 428.9 L679.2 426.9 L680.0 425.0 L680.8 423.1 L681.6 421.1 L682.5 419.2 L683.3 417.2 L684.1 415.2 L684.9 413.2 L685.7 411.2 L686.5 409.2 L687.2 407.3 L687.9 405.4 L688.6 403.5 L689.2 401.7 L689.8 400.0 L690.5 397.7 L691.2 395.5 L691.8 393.5 L692.3 391.5 L692.8 389.6 L693.2 387.6 L693.6 385.6 L694.0 383.5 L694.3 381.2 L694.6 379.4 L694.8 377.5 L695.1 375.6 L695.3 373.6 L695.5 371.6 L695.7 369.5 L695.9 367.4 L696.0 365.4 L696.0 363.3 L696.0 361.2 L695.9 359.1 L695.8 357.0 L695.6 355.0 L695.2 352.9 L694.8 350.7 L694.3 348.4 L693.8 346.1 L693.2 343.9 L692.6 341.6 L692.0 339.5 L691.4 337.5 L690.9 335.7 L690.5 334.0 L690.1 332.6 L689.8 331.5Z" fill="#f7f7f7"/>
<clipPath id="cpRC"><path d="M691.0 327.4 L691.8 328.2 L692.7 329.0 L693.6 329.9 L694.7 331.0 L695.9 332.1 L697.1 333.2 L698.4 334.5 L699.8 335.8 L701.3 337.2 L702.8 338.6 L704.3 340.1 L705.9 341.6 L707.6 343.2 L709.3 344.8 L711.0 346.4 L712.8 348.1 L714.5 349.8 L716.3 351.5 L718.1 353.2 L719.9 354.9 L721.7 356.6 L723.6 358.3 L725.4 360.1 L727.1 361.8 L728.9 363.5 L730.6 365.1 L732.4 366.8 L734.0 368.4 L735.7 370.0 L737.2 371.5 L738.8 373.0 L740.3 374.4 L741.7 375.8 L743.0 377.2 L744.3 378.4 L745.5 379.6 L746.6 380.7 L747.6 381.8 L748.6 382.7 L749.4 383.6 L753.8 387.6 L755.2 388.1 L754.8 387.5 L753.9 388.5 L753.6 393.3 L753.7 394.5 L753.7 395.8 L753.7 397.2 L753.8 398.7 L753.8 400.3 L753.8 401.9 L753.9 403.6 L753.9 405.4 L753.9 407.3 L753.9 409.2 L753.9 411.2 L753.9 413.2 L753.9 415.3 L753.8 417.4 L753.8 419.6 L753.8 421.8 L753.8 424.0 L753.8 426.2 L753.7 428.5 L753.7 430.8 L753.7 433.1 L753.6 435.4 L753.6 437.7 L753.6 440.0 L753.5 442.3 L753.5 444.6 L753.5 446.9 L753.4 449.2 L753.4 451.4 L753.4 453.6 L753.4 455.8 L753.3 457.9 L753.3 460.0 L753.3 462.0 L753.3 463.9 L753.2 465.9 L753.2 467.9 L753.2 470.0 L753.1 472.0 L753.1 474.0 L753.1 476.1 L753.0 478.1 L753.0 480.2 L753.0 482.2 L752.9 484.3 L752.9 486.4 L752.8 488.5 L752.8 490.5 L752.8 492.6 L752.7 494.7 L752.7 496.7 L752.6 498.8 L752.6 500.8 L752.5 502.9 L752.5 504.9 L752.5 506.9 L752.4 509.0 L752.4 511.0 L752.3 512.9 L752.3 514.9 L752.3 516.9 L752.2 518.8 L752.2 520.7 L752.1 522.6 L752.1 524.5 L752.1 526.4 L752.0 528.2 L752.0 530.0 L752.0 532.3 L751.9 534.7 L751.9 537.1 L751.8 539.5 L751.8 541.9 L751.7 544.4 L751.7 546.8 L751.7 549.2 L751.6 551.6 L751.6 554.0 L751.5 556.4 L751.5 558.7 L751.4 561.0 L751.4 563.2 L751.4 565.4 L751.3 567.6 L751.3 569.6 L751.2 571.6 L751.2 573.6 L751.2 575.4 L751.1 577.2 L751.1 578.8 L751.1 580.4 L751.1 581.8 L751.0 583.2 L751.0 584.4 L751.0 585.5 L700.0 593.0 L657.8 599.0 L657.5 597.8 L657.1 596.3 L656.6 594.4 L656.1 592.4 L655.5 590.1 L654.9 587.8 L654.3 585.4 L653.8 583.1 L653.2 580.8 L652.7 578.6 L652.3 576.7 L652.0 575.0 L651.6 572.6 L651.3 571.3 L651.2 570.2 L651.2 568.8 L651.3 566.3 L651.5 562.0 L651.6 560.7 L651.6 559.2 L651.7 557.6 L651.8 555.9 L651.8 554.1 L651.9 552.2 L652.0 550.2 L652.1 548.2 L652.2 546.0 L652.3 543.8 L652.5 541.6 L652.6 539.3 L652.7 537.1 L652.8 534.8 L653.0 532.5 L653.1 530.2 L653.2 527.9 L653.4 525.7 L653.5 523.5 L653.7 521.3 L653.8 519.2 L653.9 517.2 L654.1 515.2 L654.2 513.4 L654.4 511.6 L654.5 510.0 L654.7 507.3 L655.0 504.8 L655.3 502.4 L655.5 500.1 L655.8 497.9 L656.1 495.8 L656.4 493.8 L656.7 491.9 L657.0 490.1 L657.3 488.3 L657.6 486.6 L657.9 484.9 L658.2 483.2 L658.4 481.6 L658.7 480.0 L659.1 477.4 L659.6 474.8 L660.1 472.4 L660.5 470.2 L661.0 468.1 L661.4 466.2 L661.8 464.6 L662.1 463.1 L662.3 462.0 L671.0 446.7 L671.2 444.4 L672.1 442.6 L672.9 440.8 L673.8 438.9 L674.7 436.9 L675.6 434.9 L676.5 432.9 L677.4 430.9 L678.3 428.9 L679.2 426.9 L680.0 425.0 L680.8 423.1 L681.6 421.1 L682.5 419.2 L683.3 417.2 L684.1 415.2 L684.9 413.2 L685.7 411.2 L686.5 409.2 L687.2 407.3 L687.9 405.4 L688.6 403.5 L689.2 401.7 L689.8 400.0 L690.5 397.7 L691.2 395.5 L691.8 393.5 L692.3 391.5 L692.8 389.6 L693.2 387.6 L693.6 385.6 L694.0 383.5 L694.3 381.2 L694.6 379.4 L694.8 377.5 L695.1 375.6 L695.3 373.6 L695.5 371.6 L695.7 369.5 L695.9 367.4 L696.0 365.4 L696.0 363.3 L696.0 361.2 L695.9 359.1 L695.8 357.0 L695.6 355.0 L695.2 352.9 L694.8 350.7 L694.3 348.4 L693.8 346.1 L693.2 343.9 L692.6 341.6 L692.0 339.5 L691.4 337.5 L690.9 335.7 L690.5 334.0 L690.1 332.6 L689.8 331.5Z"/></clipPath>
<g clip-path="url(#cpRC)">
<path d="M700 395 L735 380 L752 400 L752 470 L712 470 Z" fill="#dcdcdc" opacity=".5" filter="url(#blr)"/>
<path d="M658 520 L752 512 L752 560 L658 572 Z" fill="#d5d5d5" opacity=".45" filter="url(#blr)"/>
<path d="M640 324.0L760 350.9" stroke="#888" stroke-width=".75" opacity="0.8"/><path d="M640 327.3L760 353.4" stroke="#888" stroke-width=".75" opacity="0.8"/><path d="M640 330.3L760 355.6" stroke="#888" stroke-width=".75" opacity="1"/><path d="M640 333.6L760 358.0" stroke="#888" stroke-width=".75" opacity="0.7"/><path d="M640 336.9L760 360.4" stroke="#888" stroke-width=".75" opacity="0.7"/><path d="M640 339.9L760 362.6" stroke="#888" stroke-width=".75" opacity="0.9"/><path d="M640 343.2L760 365.1" stroke="#888" stroke-width=".75" opacity="0.8"/><path d="M640 345.8L760 367.0" stroke="#888" stroke-width=".75" opacity="1"/><path d="M640 349.1L760 369.4" stroke="#888" stroke-width=".75" opacity="1"/><path d="M640 352.1L760 371.6" stroke="#888" stroke-width=".75" opacity="0.8"/><path d="M640 354.7L760 373.5" stroke="#888" stroke-width=".75" opacity="0.8"/><path d="M640 358.0L760 375.9" stroke="#888" stroke-width=".75" opacity="1"/><path d="M640 361.3L760 378.4" stroke="#888" stroke-width=".75" opacity="0.7"/><path d="M640 364.6L760 380.8" stroke="#888" stroke-width=".75" opacity="0.7"/><path d="M640 367.2L760 382.7" stroke="#888" stroke-width=".75" opacity="0.7"/><path d="M640 370.2L760 384.9" stroke="#888" stroke-width=".75" opacity="0.7"/><path d="M640 373.2L760 387.1" stroke="#888" stroke-width=".75" opacity="1"/><path d="M640 376.5L760 389.5" stroke="#888" stroke-width=".75" opacity="1"/><path d="M640 379.8L760 392.0" stroke="#888" stroke-width=".75" opacity="1"/><path d="M640 382.8L760 394.2" stroke="#888" stroke-width=".75" opacity="1"/><path d="M640 385.4L760 396.1" stroke="#888" stroke-width=".75" opacity="0.9"/><path d="M640 388.0L760 398.0" stroke="#888" stroke-width=".75" opacity="0.7"/><path d="M640 390.6L760 399.9" stroke="#888" stroke-width=".75" opacity="1"/><path d="M640 393.2L760 401.8" stroke="#888" stroke-width=".75" opacity="0.9"/><path d="M640 396.5L760 404.3" stroke="#888" stroke-width=".75" opacity="1"/><path d="M640 399.8L760 406.7" stroke="#888" stroke-width=".75" opacity="0.9"/><path d="M640 402.8L760 408.9" stroke="#888" stroke-width=".75" opacity="1"/><path d="M640 406.1L760 411.3" stroke="#888" stroke-width=".75" opacity="0.9"/><path d="M640 409.4L760 413.7" stroke="#888" stroke-width=".75" opacity="1"/><path d="M640 412.7L760 416.2" stroke="#888" stroke-width=".75" opacity="0.8"/><path d="M640 415.7L760 418.4" stroke="#888" stroke-width=".75" opacity="0.7"/><path d="M640 418.7L760 420.6" stroke="#888" stroke-width=".75" opacity="0.8"/><path d="M640 422.0L760 423.0" stroke="#888" stroke-width=".75" opacity="0.9"/><path d="M640 425.3L760 425.4" stroke="#888" stroke-width=".75" opacity="0.7"/><path d="M640 428.6L760 427.9" stroke="#888" stroke-width=".75" opacity="0.8"/><path d="M640 431.9L760 430.3" stroke="#888" stroke-width=".75" opacity="0.9"/><path d="M640 434.9L760 432.5" stroke="#888" stroke-width=".75" opacity="0.7"/><path d="M640 437.5L760 434.4" stroke="#888" stroke-width=".75" opacity="1"/><path d="M640 440.8L760 436.8" stroke="#888" stroke-width=".75" opacity="1"/><path d="M640 443.4L760 438.7" stroke="#888" stroke-width=".75" opacity="0.9"/><path d="M640 446.0L760 440.7" stroke="#888" stroke-width=".75" opacity="1"/><path d="M640 448.6L760 442.6" stroke="#888" stroke-width=".75" opacity="0.7"/><path d="M640 451.6L760 445.0" stroke="#888" stroke-width=".75" opacity="1"/><path d="M640 454.6L760 447.8" stroke="#888" stroke-width=".75" opacity="0.7"/><path d="M640 457.2L760 450.3" stroke="#888" stroke-width=".75" opacity="0.7"/><path d="M640 460.2L760 453.1" stroke="#888" stroke-width=".75" opacity="0.9"/><path d="M640 463.5L760 456.3" stroke="#888" stroke-width=".75" opacity="0.9"/><path d="M640 466.8L760 459.4" stroke="#888" stroke-width=".75" opacity="0.8"/><path d="M640 469.4L760 461.9" stroke="#888" stroke-width=".75" opacity="0.9"/><path d="M640 472.0L760 464.3" stroke="#888" stroke-width=".75" opacity="0.7"/><path d="M640 474.6L760 466.8" stroke="#888" stroke-width=".75" opacity="0.7"/><path d="M640 477.2L760 469.3" stroke="#888" stroke-width=".75" opacity="1"/><path d="M640 480.2L760 472.1" stroke="#888" stroke-width=".75" opacity="0.9"/><path d="M640 482.8L760 474.6" stroke="#888" stroke-width=".75" opacity="0.7"/><path d="M640 485.8L760 477.4" stroke="#888" stroke-width=".75" opacity="0.9"/><path d="M640 488.8L760 480.2" stroke="#888" stroke-width=".75" opacity="0.8"/><path d="M640 491.8L760 483.1" stroke="#888" stroke-width=".75" opacity="1"/><path d="M640 494.8L760 485.9" stroke="#888" stroke-width=".75" opacity="1"/><path d="M640 498.1L760 489.1" stroke="#888" stroke-width=".75" opacity="0.7"/><path d="M640 501.4L760 492.2" stroke="#888" stroke-width=".75" opacity="0.9"/><path d="M640 504.4L760 495.0" stroke="#888" stroke-width=".75" opacity="0.8"/><path d="M640 507.4L760 497.9" stroke="#888" stroke-width=".75" opacity="1"/><path d="M640 510.4L760 500.7" stroke="#888" stroke-width=".75" opacity="0.9"/><path d="M640 513.7L760 503.8" stroke="#888" stroke-width=".75" opacity="0.9"/><path d="M640 516.3L760 506.3" stroke="#888" stroke-width=".75" opacity="1"/><path d="M640 519.6L760 509.4" stroke="#888" stroke-width=".75" opacity="0.9"/><path d="M640 522.2L760 511.9" stroke="#888" stroke-width=".75" opacity="1"/><path d="M640 525.5L760 515.0" stroke="#888" stroke-width=".75" opacity="0.8"/><path d="M640 528.1L760 517.5" stroke="#888" stroke-width=".75" opacity="0.9"/><path d="M640 531.1L760 520.3" stroke="#888" stroke-width=".75" opacity="0.9"/><path d="M640 534.4L760 523.4" stroke="#888" stroke-width=".75" opacity="0.9"/><path d="M640 537.7L760 526.6" stroke="#888" stroke-width=".75" opacity="0.9"/><path d="M640 541.0L760 529.7" stroke="#888" stroke-width=".75" opacity="1"/><path d="M640 543.6L760 532.2" stroke="#888" stroke-width=".75" opacity="0.7"/><path d="M640 546.9L760 535.3" stroke="#888" stroke-width=".75" opacity="0.7"/><path d="M640 549.9L760 538.1" stroke="#888" stroke-width=".75" opacity="0.9"/><path d="M640 553.2L760 541.3" stroke="#888" stroke-width=".75" opacity="1"/><path d="M640 556.2L760 544.1" stroke="#888" stroke-width=".75" opacity="0.9"/><path d="M640 558.8L760 546.6" stroke="#888" stroke-width=".75" opacity="0.9"/><path d="M640 561.4L760 549.0" stroke="#888" stroke-width=".75" opacity="0.9"/><path d="M640 564.4L760 551.9" stroke="#888" stroke-width=".75" opacity="0.9"/><path d="M640 567.4L760 554.7" stroke="#888" stroke-width=".75" opacity="1"/><path d="M640 570.0L760 557.2" stroke="#888" stroke-width=".75" opacity="0.7"/><path d="M640 573.3L760 560.3" stroke="#888" stroke-width=".75" opacity="0.8"/><path d="M640 576.3L760 563.1" stroke="#888" stroke-width=".75" opacity="0.8"/><path d="M640 579.6L760 566.3" stroke="#888" stroke-width=".75" opacity="0.9"/><path d="M640 582.2L760 568.7" stroke="#888" stroke-width=".75" opacity="0.9"/><path d="M640 584.8L760 571.2" stroke="#888" stroke-width=".75" opacity="1"/><path d="M640 588.1L760 574.3" stroke="#888" stroke-width=".75" opacity="0.7"/><path d="M640 590.7L760 576.8" stroke="#888" stroke-width=".75" opacity="0.9"/><path d="M640 593.7L760 579.6" stroke="#888" stroke-width=".75" opacity="0.8"/><path d="M640 596.7L760 582.5" stroke="#888" stroke-width=".75" opacity="0.8"/><path d="M640 599.3L760 584.9" stroke="#888" stroke-width=".75" opacity="0.9"/><path d="M640 602.6L760 588.1" stroke="#888" stroke-width=".75" opacity="0.8"/><path d="M640 605.9L760 591.2" stroke="#888" stroke-width=".75" opacity="1"/>
</g>
<path d="M683.8 326.3 Q690 325.200 694 329 L749.4 383.6" fill="none" stroke="#1e1e1e" stroke-width="1.9"/>
<path d="M749.4 383.6 Q753.6 388 753.6 393.3 L753.3 460 L752 530 L751 585.5 L700 593 L657.8 599" fill="none" stroke="#1e1e1e" stroke-width="1.9" stroke-linejoin="round"/>
<path d="M657.8 599.0C656.8 595.0 653.0 581.2 652.0 575.0C651.0 568.8 651.1 572.8 651.5 562.0C651.9 551.2 653.3 523.7 654.5 510.0C655.7 496.3 657.4 488.0 658.7 480.0C660.0 472.0 661.7 465.0 662.3 462.0" fill="none" stroke="#1e1e1e" stroke-width="1.7"/>
<path d="M689.8 331.5C690.8 335.8 695.0 348.7 695.8 357.0C696.5 365.3 695.3 374.0 694.3 381.2C693.3 388.4 692.2 392.7 689.8 400.0C687.4 407.3 683.5 416.8 680.0 425.0C676.5 433.2 671.8 443.2 669.0 449.0C666.2 454.8 664.0 458.2 663.0 460.0" fill="none" stroke="#1e1e1e" stroke-width="1.8"/>
<path d="M696.0 364.0C696.8 370.8 700.4 390.7 701.0 405.0C701.6 419.3 701.3 434.5 699.5 450.0C697.7 465.5 691.6 489.8 690.0 497.8" fill="none" stroke="#4a4a4a" stroke-width="1.1"/>
<path d="M405.0 325.3C410.8 326.0 426.7 327.7 440.0 329.5C453.3 331.3 467.4 334.4 485.0 336.0C502.6 337.6 525.2 338.7 545.3 339.0C565.4 339.3 587.9 339.0 605.5 337.6C623.1 336.2 637.7 332.7 650.7 330.8C663.8 328.9 678.3 327.1 683.8 326.3" fill="none" stroke="#1e1e1e" stroke-width="1.9"/>
<circle cx="524.4" cy="540.7" r="11.6" fill="#a4a4a4" stroke="#5a5a5a" stroke-width="1.1"/>
<circle cx="524.4" cy="540.7" r="9" fill="#a9a9a9" stroke="#8e8e8e" stroke-width=".7"/>
<circle cx="523.8" cy="537.7" r="1.2" fill="#444"/>
<circle cx="527.4" cy="540.1" r="1.2" fill="#444"/>
<circle cx="521.4" cy="541.3" r="1.2" fill="#444"/>
<circle cx="525.0" cy="543.7" r="1.2" fill="#444"/>
<circle cx="527.6" cy="639.7" r="11.6" fill="#a4a4a4" stroke="#5a5a5a" stroke-width="1.1"/>
<circle cx="527.6" cy="639.7" r="9" fill="#a9a9a9" stroke="#8e8e8e" stroke-width=".7"/>
<circle cx="527.0" cy="636.7" r="1.2" fill="#444"/>
<circle cx="530.6" cy="639.1" r="1.2" fill="#444"/>
<circle cx="524.6" cy="640.3" r="1.2" fill="#444"/>
<circle cx="528.2" cy="642.7" r="1.2" fill="#444"/>
<path d="M161.6 474.6 Q255 436 342 409" fill="none" stroke="#1e1e1e" stroke-width="1.7"/>
<path d="M164.3 496 Q262 452 344 422.5" fill="none" stroke="#1e1e1e" stroke-width="1.7"/>
<path d="M755 399.7 Q830 422 939.5 467.8" fill="none" stroke="#1e1e1e" stroke-width="1.7"/>
<path d="M755 418.7 Q835 448 936.8 488.4" fill="none" stroke="#1e1e1e" stroke-width="1.7"/></g></svg>
<!-- PLUGIN PANEL -->
<div class="a" style="left:1048px;top:288px;width:482px;height:51px;background:#393939;border-radius:5px 5px 0 0;border-top:1px solid #333"></div>
<div class="a" style="left:1048px;top:288px;width:482px;height:17px;background:#353535;border-radius:5px 5px 0 0"></div>
<div class="a" style="left:1049px;top:305px;width:56px;height:34px;background:#484848"></div>
<div class="a" style="left:1048px;top:339px;width:482px;height:64px;background:#02222a"></div>
<div class="a" style="left:1048px;top:403px;width:482px;height:57px;background:#042a33"></div>
<div class="a" style="left:1048px;top:460px;width:482px;height:512px;background:#f6f6f5"></div>
<div class="a" style="left:1048px;top:468px;width:482px;height:67.5px;background:#ece9e4"></div>
<div class="a" style="left:1048px;top:667px;width:482px;height:264px;background:#ece9e4"></div>
<div class="a" style="left:1048px;top:972px;width:482px;height:86px;background:#02222a"></div>
<div class="a" style="left:1048px;top:1055px;width:155px;height:3px;background:#1fc3a0"></div>
<svg style="left:1048px;top:288px" width="482" height="770">
  <path d="M7 6.500l6.500 6.500M13.500 6.500l-6.500 6.500" stroke="#9a9a9a" stroke-width="1.300"/>
  <path d="M469 7l-3 2.500 3 2.500M473 7l-3 2.500 3 2.500" fill="none" stroke="#9a9a9a" stroke-width="1"/>
</svg>
<div class="t" style="left:1060px;top:313px;font-size:12.5px;color:#f2f2f2;font-weight:bold">Plmbr</div>
<!-- header -->
<svg style="left:0;top:0" width="1728" height="1080">
  <path d="M1105 372h-17M1095.500 364l-8 8 8 8" fill="none" stroke="#fff" stroke-width="2.200" stroke-linecap="round" stroke-linejoin="round"/>
  <path d="M1339 365.500h21.500M1339 372h15M1339 378.500h8" stroke="#fff" stroke-width="2.400"/>
  <rect x="1381" y="353" width="129" height="38" rx="4" fill="#fff"/>
  <circle cx="1411" cy="370" r="6.800" fill="none" stroke="#111" stroke-width="2.400"/>
  <path d="M1416 375.500l6.500 6.500" stroke="#111" stroke-width="2.600" stroke-linecap="round"/>
  <rect x="1398" y="413" width="111" height="41" fill="#21434a"/>
  <!-- Sketches row -->
  <path d="M1081 499l6 6 6-6" fill="none" stroke="#111" stroke-width="2.400"/>
  <g fill="none" stroke="#111" stroke-width="2.300" stroke-linejoin="round">
   <path d="M1137 516l2.500-10 17-17a4.600 4.600 0 0 1 6.500 6.500l-17 17z"/>
   <path d="M1139.500 506l7 7M1154 491.500l7 7"/>
  </g>
  <rect x="1472" y="484" width="38" height="38" fill="#d3d1ce"/>
  <path d="M1491 493v20M1481 503h20" stroke="#111" stroke-width="2.300"/>
  <!-- table -->
  <g fill="none" stroke="#d2d2d2" stroke-width="1.300">
   <rect x="1063.500" y="551.500" width="450.500" height="101"/>
   <path d="M1199.500 551.500v101M1199.500 585h314.500M1199.500 618.500h314.500"/>
  </g>
  <!-- Materials -->
  <g fill="none" stroke="#111" stroke-width="2.300" stroke-linejoin="round" stroke-linecap="round">
   <path d="M1086.500 692.500l7 7.500-7 7.500"/>
   <path d="M1086.500 759l7 7.500-7 7.500"/>
   <path d="M1086.500 825.500l7 7.500-7 7.500"/>
   <path d="M1086.500 891.500l7 7.500-7 7.500"/>
   <path d="M1149.500 686l12.500 6.500v14.500l-12.500 7-12.500-7v-14.500z M1137 692.500l12.500 6.500 12.500-6.500M1149.500 699v15"/>
   <path d="M1137.500 780l24-27v27z"/>
   <path d="M1150 776h7v-7.500z" stroke-width="1.900"/>
   <rect x="1137" y="820" width="25.500" height="25.500" rx="2"/>
   <path d="M1137 827h25.500M1144 827v18.500"/>
   <rect x="1137" y="886.500" width="25.500" height="25.500" rx="2"/>
   <path d="M1137 893.500h25.500M1144 893.500v18.500"/>
  </g>
  <path d="M1158.500 759v18M1140 778h18" stroke="#111" stroke-width="1.500" stroke-dasharray="1.500 2"/>
  <rect x="1472" y="682" width="38" height="37" fill="#d3d1ce"/>
  <rect x="1472" y="748" width="38" height="37" fill="#d3d1ce"/>
  <rect x="1472" y="814" width="38" height="38" fill="#d3d1ce"/>
  <rect x="1472" y="881" width="38" height="37" fill="#d3d1ce"/>
  <path d="M1491 690.500v20M1481 700.500h20M1491 756.500v20M1481 766.500h20M1491 823v20M1481 833h20M1491 889.500v20M1481 899.500h20" stroke="#111" stroke-width="2.300"/>
  <!-- bottom nav icons -->
  <path d="M1114 992.500a2 2 0 0 1 2-2h6l2.500 2.500h12a2 2 0 0 1 2 2v12.500a2 2 0 0 1-2 2h-20.500a2 2 0 0 1-2-2z" fill="#fff"/>
  <g fill="#a7b6b9">
   <rect x="1278" y="988.500" width="9.500" height="9.500"/>
   <path d="M1295 987.500l6 6-6 6-6-6z"/>
   <rect x="1278" y="1001" width="9.500" height="9.500"/>
   <rect x="1290.500" y="1001" width="9.500" height="9.500"/>
  </g>
  <g fill="none" stroke="#a7b6b9" stroke-width="2.600">
   <path d="M1443.500 1002a8.300 8.300 0 0 1 12-9.500M1459.500 998a8.300 8.300 0 0 1-12 9.500"/>
  </g>
  <path d="M1452 988l6 4.500-6.500 3z M1451 1012l-6-4.500 6.500-3z" fill="#a7b6b9"/>
</svg>
<div class="t" style="left:1125.7px;top:349.3px;font-size:21.9px;color:#fff;font-weight:bold">Cards - Boys Polo</div>
<div class="t" style="left:1126.7px;top:374.3px;font-size:21.9px;color:#fff;font-weight:bold;letter-spacing:.3px">T-Shirt</div>
<div class="t" style="left:1434.5px;top:363.7px;font-size:16.5px;color:#8d8d8d;letter-spacing:.6px">Search..</div>
<div class="t" style="left:1417.1px;top:425.7px;font-size:14.35px;color:#98a4a7;font-weight:bold;letter-spacing:-.19px">DOC VIEW</div>
<div class="t" style="left:1184px;top:490.7px;font-size:23.9px;color:#141414;letter-spacing:.5px;font-weight:bold">Sketches</div>
<div class="t" style="left:1221.7px;top:558.7px;font-size:19px;color:#111;-webkit-text-stroke:.35px #111;letter-spacing:1.3px">Front</div>
<div class="t" style="left:1221.7px;top:591.6px;font-size:19px;color:#111;-webkit-text-stroke:.35px #111;letter-spacing:.7px">Back</div>
<div class="t" style="left:1221.7px;top:625.3px;font-size:19px;color:#111;-webkit-text-stroke:.35px #111;letter-spacing:1px">Polo Neckline</div>
<div class="t" style="left:1181.5px;top:688.2px;font-size:24px;color:#141414;letter-spacing:.5px;font-weight:bold">Materials</div>
<div class="t" style="left:1183px;top:753.3px;font-size:24px;color:#141414;letter-spacing:.68px;font-weight:bold">Measurements</div>
<div class="t" style="left:1181.5px;top:821.4px;font-size:24px;color:#141414;letter-spacing:.61px;font-weight:bold">Development Sampl...</div>
<div class="t" style="left:1181.5px;top:887px;font-size:24px;color:#141414;letter-spacing:.6px;font-weight:bold">Test Fit</div>
<div class="t" style="left:1097.1px;top:1022.7px;font-size:13.9px;color:#fff;font-weight:bold;letter-spacing:-.06px">FOLDER</div>
<div class="t" style="left:1250.5px;top:1022.7px;font-size:13.9px;color:#a7b6b9;font-weight:bold;letter-spacing:.05px">LIBRARIES</div>
<div class="t" style="left:1422px;top:1022.7px;font-size:13.9px;color:#a7b6b9;font-weight:bold;letter-spacing:.2px">RECENT</div>
<!-- THUMBNAIL -->
<svg style="left:0;top:0" width="1728" height="1080">
  <defs>
    <clipPath id="thc"><rect x="1050" y="540" width="170" height="127"/></clipPath>
    <clipPath id="thw"><circle cx="1122" cy="640.6" r="90.5"/></clipPath>
    <linearGradient id="thg" x1="0" x2="1"><stop offset="0" stop-color="#cfcfcf"/><stop offset="1" stop-color="#e2e2e2"/></linearGradient>
  </defs>
  <g clip-path="url(#thc)">
    <circle cx="1122" cy="640.6" r="92" fill="#e3e3e3"/>
    <rect x="1193" y="560" width="24" height="110" fill="url(#thg)" clip-path="url(#thw)"/>
    <g clip-path="url(#thw)">
      <rect x="1056.6" y="540" width="136.5" height="130" fill="#fdfdfd"/>
      <use href="#drw" transform="translate(1067.5 557.5) scale(0.147 0.26) translate(-162 -325)" opacity=".9"/>
    </g>
  </g>
</svg>
</body></html>
